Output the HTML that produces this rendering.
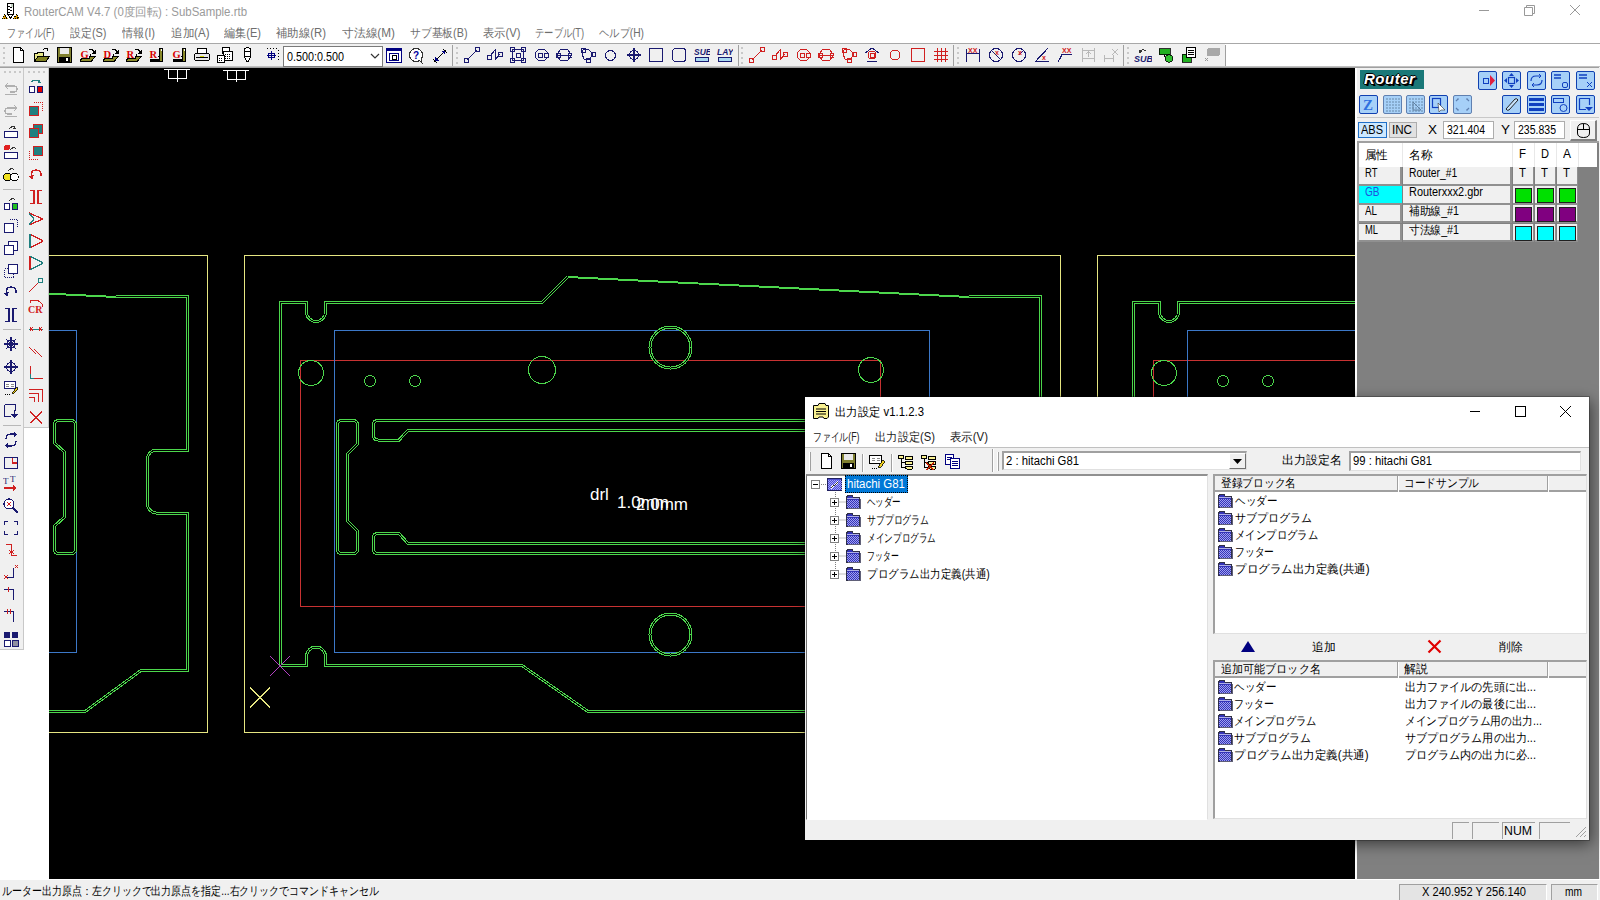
<!DOCTYPE html>
<html><head><meta charset="utf-8"><style>*{margin:0;padding:0;box-sizing:border-box}
html,body{width:1600px;height:900px;overflow:hidden;background:#fff;font-family:"Liberation Sans",sans-serif;font-size:12px;color:#000;position:relative}
.a{position:absolute}
.t{position:absolute;white-space:nowrap;line-height:16px;height:16px;transform-origin:0 50%}
</style></head><body>
<div class="a" style="left:0px;top:0px;width:1600px;height:22px;background:#fff"></div><svg class="a" style="left:0px;top:0px" width="22" height="22" viewBox="0 0 22 22" shape-rendering="crispEdges"><rect x="7.5" y="3.5" width="6" height="11" fill="#fff" stroke="#000"/>
<path d="M8 6.5 H10 M8 9.5 H10 M8 12.5 H10 M10 7.5 H12 M10 10.5 H12" stroke="#000"/><rect x="11" y="4" width="2" height="3" fill="#c8d8c8"/>
<path d="M7.5 14.5 L10.5 18 L13.5 14.5" fill="#fff" stroke="#000"/>
<path d="M2 18.5 L4.5 14.5 L7.5 18.5 Z M13.5 18.5 L16.5 14.5 L18.5 18.5 Z" fill="#e0a000" stroke="#000" stroke-dasharray="1 1"/></svg><div class="t" style="left:24px;top:3.5px;font-size:12px;color:#9a9a9a;transform:scaleX(0.9526);width:235.1px;overflow:hidden;">RouterCAM V4.7 (0度回転) : SubSample.rtb</div><svg class="a" style="left:1470px;top:0px" width="130" height="22" viewBox="0 0 130 22" ><path d="M9 10.5 H19" stroke="#999"/>
<path d="M54.5 7.5 H62.5 V15.5 H54.5 Z M56.5 7.5 V5.5 H64.5 V13.5 H62.5" fill="none" stroke="#999"/>
<path d="M100 5 L110 15 M110 5 L100 15" stroke="#999"/></svg><div class="a" style="left:0px;top:22px;width:1600px;height:21px;background:#fff"></div><div class="t" style="left:7px;top:24.5px;font-size:12px;color:#6e6e6e;transform:scaleX(0.7501);width:64.3px;overflow:hidden;">ファイル(F)</div><div class="t" style="left:69.5px;top:24.5px;font-size:12px;color:#6e6e6e;transform:scaleX(0.9125);width:41.0px;overflow:hidden;">設定(S)</div><div class="t" style="left:122px;top:24.5px;font-size:12px;color:#6e6e6e;transform:scaleX(0.9341);width:36.3px;overflow:hidden;">情報(I)</div><div class="t" style="left:171px;top:24.5px;font-size:12px;color:#6e6e6e;transform:scaleX(0.9625);width:41.0px;overflow:hidden;">追加(A)</div><div class="t" style="left:224px;top:24.5px;font-size:12px;color:#6e6e6e;transform:scaleX(0.9250);width:41.0px;overflow:hidden;">編集(E)</div><div class="t" style="left:276px;top:24.5px;font-size:12px;color:#6e6e6e;transform:scaleX(0.9493);width:53.7px;overflow:hidden;">補助線(R)</div><div class="t" style="left:342px;top:24.5px;font-size:12px;color:#6e6e6e;transform:scaleX(0.9815);width:55.0px;overflow:hidden;">寸法線(M)</div><div class="t" style="left:410px;top:24.5px;font-size:12px;color:#6e6e6e;transform:scaleX(0.8984);width:65.0px;overflow:hidden;">サブ基板(B)</div><div class="t" style="left:482.5px;top:24.5px;font-size:12px;color:#6e6e6e;transform:scaleX(0.9375);width:41.0px;overflow:hidden;">表示(V)</div><div class="t" style="left:535px;top:24.5px;font-size:12px;color:#6e6e6e;transform:scaleX(0.7737);width:64.3px;overflow:hidden;">テーブル(T)</div><div class="t" style="left:599px;top:24.5px;font-size:12px;color:#6e6e6e;transform:scaleX(0.8543);width:53.7px;overflow:hidden;">ヘルプ(H)</div><div class="a" style="left:0px;top:43px;width:1600px;height:25px;background:#fff;border-top:1px solid #a8a8a8"></div><div class="a" style="left:0px;top:44px;width:1225px;height:23px;background:#f0f0f0"></div><div class="a" style="left:0px;top:66px;width:1600px;height:2px;background:linear-gradient(#d0d0d0,#909090)"></div><div class="a" style="left:3px;top:47px;width:2px;height:2px;background:#c8c8c8"></div><div class="a" style="left:3px;top:52px;width:2px;height:2px;background:#c8c8c8"></div><div class="a" style="left:3px;top:57px;width:2px;height:2px;background:#c8c8c8"></div><div class="a" style="left:3px;top:62px;width:2px;height:2px;background:#c8c8c8"></div><svg class="a" style="left:12px;top:47px" width="16" height="16" viewBox="0 0 16 16" shape-rendering="crispEdges"><path d="M1.5 .5 H8.5 L11.5 3.5 V15.5 H1.5 Z" fill="#fff" stroke="#000"/><path d="M8.5 .5 V3.5 H11.5" fill="none" stroke="#000"/></svg><svg class="a" style="left:34px;top:47px" width="16" height="16" viewBox="0 0 16 16" shape-rendering="crispEdges"><path d="M.5 6.5 H3 L4 5 H9 V14.5 H.5 Z" fill="#e8e888" stroke="#000"/><path d="M.5 14.5 L4 9.5 H15.5 L12 14.5 Z" fill="#808020" stroke="#000"/><path d="M9 3 Q11 0 14 2 M12.5 1.5 L14 2 L13.5 4" fill="none" stroke="#000"/></svg><svg class="a" style="left:57px;top:47px" width="16" height="16" viewBox="0 0 16 16" shape-rendering="crispEdges"><rect x=".5" y=".5" width="14" height="15" fill="#808030" stroke="#000"/><rect x="3" y="1" width="9" height="6" fill="#e8e8e8"/><rect x="2" y="10" width="11" height="5" fill="#000"/><rect x="9" y="11" width="2" height="3" fill="#fff"/></svg><svg class="a" style="left:80px;top:47px" width="16" height="16" viewBox="0 0 16 16" shape-rendering="crispEdges"><text x="0.5" y="11" font-family="Liberation Serif" font-weight="bold" font-size="10.5" fill="#d80000">G</text><path d="M9 2.5 H12 L14.5 5" fill="none" stroke="#000"/><path d="M12 6.5 H15.5 V3 Z" fill="#000"/><path d="M10.5 7 V10.5 M9.5 7.5 H10.5" stroke="#000"/><path d="M0.5 14.5 H11 L15.5 9.5 H9.5 V11.5 H2.5 L0.5 12.5 Z" fill="#8a8a2a" stroke="#000"/></svg><svg class="a" style="left:103px;top:47px" width="16" height="16" viewBox="0 0 16 16" shape-rendering="crispEdges"><text x="0.5" y="11" font-family="Liberation Serif" font-weight="bold" font-size="10.5" fill="#d80000">D</text><path d="M9 2.5 H12 L14.5 5" fill="none" stroke="#000"/><path d="M12 6.5 H15.5 V3 Z" fill="#000"/><path d="M10.5 7 V10.5 M9.5 7.5 H10.5" stroke="#000"/><path d="M0.5 14.5 H11 L15.5 9.5 H9.5 V11.5 H2.5 L0.5 12.5 Z" fill="#8a8a2a" stroke="#000"/></svg><svg class="a" style="left:126px;top:47px" width="16" height="16" viewBox="0 0 16 16" shape-rendering="crispEdges"><text x="0.5" y="11" font-family="Liberation Serif" font-weight="bold" font-size="10.5" fill="#d80000">R</text><path d="M9 2.5 H12 L14.5 5" fill="none" stroke="#000"/><path d="M12 6.5 H15.5 V3 Z" fill="#000"/><path d="M10.5 7 V10.5 M9.5 7.5 H10.5" stroke="#000"/><path d="M0.5 14.5 H11 L15.5 9.5 H9.5 V11.5 H2.5 L0.5 12.5 Z" fill="#8a8a2a" stroke="#000"/></svg><svg class="a" style="left:149px;top:47px" width="16" height="16" viewBox="0 0 16 16" shape-rendering="crispEdges"><text x="0.5" y="11" font-family="Liberation Serif" font-weight="bold" font-size="10.5" fill="#d80000">R</text><rect x="10.5" y="1.5" width="3" height="13" fill="#8a8a2a" stroke="#000"/><rect x="12" y="2" width="1" height="2" fill="#fff"/><rect x="1" y="12" width="10" height="3" fill="#000"/><path d="M8.5 9.5 H10.5" stroke="#000"/></svg><svg class="a" style="left:172px;top:47px" width="16" height="16" viewBox="0 0 16 16" shape-rendering="crispEdges"><text x="0.5" y="11" font-family="Liberation Serif" font-weight="bold" font-size="10.5" fill="#d80000">G</text><rect x="10.5" y="1.5" width="3" height="13" fill="#8a8a2a" stroke="#000"/><rect x="12" y="2" width="1" height="2" fill="#fff"/><rect x="1" y="12" width="10" height="3" fill="#000"/><path d="M8.5 9.5 H10.5" stroke="#000"/></svg><svg class="a" style="left:194px;top:47px" width="16" height="16" viewBox="0 0 16 16" shape-rendering="crispEdges"><path d="M4 1.5 H13 L12 6 H3 Z" fill="#fff" stroke="#000"/><rect x=".5" y="6.5" width="15" height="7" rx="2" fill="#e8e8e8" stroke="#000"/><path d="M2 10.5 H14" stroke="#000"/><rect x="6" y="9" width="4" height="1" fill="#d0d000"/></svg><svg class="a" style="left:217px;top:47px" width="16" height="16" viewBox="0 0 16 16" shape-rendering="crispEdges"><rect x="5.5" y=".5" width="7" height="6" fill="#fff" stroke="#000"/><rect x="6.5" y="4.5" width="9" height="9" fill="#fff" stroke="#000"/><rect x=".5" y="8.5" width="7" height="7" fill="#fff" stroke="#000"/><path d="M8 7 H14 M8 9 H14 M8 11 H14 M2 11 H5 M2 13 H5" stroke="#000" stroke-dasharray="1 1"/></svg><svg class="a" style="left:242px;top:47px" width="11" height="16" viewBox="0 0 11 16" shape-rendering="crispEdges"><path d="M2.5 1.5 Q5 0 8.5 1.5 V10 L6 14.5 H5 L2.5 10 Z" fill="#fff" stroke="#000"/><path d="M3 4 H8 M3 9 H8" stroke="#000"/></svg><svg class="a" style="left:264px;top:47px" width="16" height="16" viewBox="0 0 16 16" shape-rendering="crispEdges"><path d="M3 8.5 H12 M7.5 4 V13 M4.5 6.5 H10.5 V10.5 H4.5 Z" stroke="#000080" fill="none" stroke-width="1.4"/><path d="M3 1.5 H15 M14.5 3 V15" stroke="#000" stroke-dasharray="1 2"/></svg><div class="a" style="left:283px;top:46px;width:100px;height:21px;background:#fff;border:1px solid #7a7a7a"></div><div class="t" style="left:287px;top:48.5px;font-size:12px;color:#000;transform:scaleX(0.8990);width:64.4px;overflow:hidden;">0.500:0.500</div><svg class="a" style="left:370px;top:53px" width="10" height="7" viewBox="0 0 10 7" ><path d="M1 1 L5 5 L9 1" fill="none" stroke="#333" stroke-width="1.2"/></svg><svg class="a" style="left:386px;top:48px" width="16" height="16" viewBox="0 0 16 16" shape-rendering="crispEdges"><rect x=".5" y=".5" width="15" height="14" fill="#fff" stroke="#000080"/><rect x="1" y="1" width="14" height="2" fill="#000080"/><rect x="3.5" y="5.5" width="9" height="7" fill="none" stroke="#000080"/><rect x="6" y="7" width="4" height="4" fill="none" stroke="#000"/></svg><svg class="a" style="left:409px;top:48px" width="16" height="16" viewBox="0 0 16 16" shape-rendering="crispEdges"><circle cx="7" cy="7" r="6.5" fill="#fff" stroke="#333"/><path d="M10 12 L13 15 L12 10" fill="#fff" stroke="#333"/><text x="4" y="11" font-family="Liberation Sans" font-weight="bold" font-size="10" fill="#0000a0">?</text></svg><svg class="a" style="left:432px;top:48px" width="16" height="16" viewBox="0 0 16 16" shape-rendering="crispEdges"><path d="M2 14 L14 2" stroke="#000" stroke-width="1"/><path d="M1 11 L5 15 M11 1 L15 5" stroke="#000"/><path d="M3 13 L3 9 L7 13 Z M13 3 L13 7 L9 3 Z" fill="#000080"/></svg><div class="a" style="left:452px;top:45px;width:1px;height:21px;background:#a0a0a0"></div><div class="a" style="left:456px;top:47px;width:2px;height:2px;background:#c8c8c8"></div><div class="a" style="left:456px;top:52px;width:2px;height:2px;background:#c8c8c8"></div><div class="a" style="left:456px;top:57px;width:2px;height:2px;background:#c8c8c8"></div><div class="a" style="left:456px;top:62px;width:2px;height:2px;background:#c8c8c8"></div><svg class="a" style="left:464px;top:47px" width="16" height="16" viewBox="0 0 16 16" shape-rendering="crispEdges"><path d="M3 13 L13 3" stroke="#1a1a70"/><rect x="0.5" y="11.5" width="4" height="4" fill="none" stroke="#1a1a70"/><rect x="11.5" y="0.5" width="4" height="4" fill="none" stroke="#1a1a70"/></svg><svg class="a" style="left:487px;top:47px" width="16" height="16" viewBox="0 0 16 16" shape-rendering="crispEdges"><path d="M3 9 L8 3 L8 13 L13 7" stroke="#1a1a70" fill="none"/><rect x="0.5" y="8.5" width="4" height="4" fill="none" stroke="#1a1a70"/><rect x="11.5" y="5.5" width="4" height="4" fill="none" stroke="#1a1a70"/></svg><svg class="a" style="left:510px;top:47px" width="16" height="16" viewBox="0 0 16 16" shape-rendering="crispEdges"><rect x="2.5" y="2.5" width="11" height="11" fill="none" stroke="#1a1a70"/><rect x="0.5" y="0.5" width="4" height="4" fill="none" stroke="#1a1a70"/><rect x="11.5" y="0.5" width="4" height="4" fill="none" stroke="#1a1a70"/><rect x="0.5" y="11.5" width="4" height="4" fill="none" stroke="#1a1a70"/><rect x="11.5" y="11.5" width="4" height="4" fill="none" stroke="#1a1a70"/><rect x="6.0" y="6.0" width="4" height="4" fill="none" stroke="#1a1a70"/></svg><svg class="a" style="left:534px;top:47px" width="16" height="16" viewBox="0 0 16 16" shape-rendering="crispEdges"><path d="M4.5 2.5 H10.5 L14 6 V10 L10.5 13.5 H4.5 L1 10 V6 Z" fill="none" stroke="#1a1a70"/><rect x="4.5" y="6.5" width="4" height="4" fill="none" stroke="#1a1a70"/><rect x="10.5" y="6.5" width="4" height="4" fill="none" stroke="#1a1a70"/></svg><svg class="a" style="left:556px;top:47px" width="16" height="16" viewBox="0 0 16 16" shape-rendering="crispEdges"><path d="M4.5 2.5 H11.5 L15 7 V9 L11.5 13.5 H4.5 L1 9 V7 Z M1 8 H15" fill="none" stroke="#1a1a70"/><rect x="0.0" y="6.5" width="4" height="4" fill="none" stroke="#1a1a70"/><rect x="12.5" y="6.5" width="4" height="4" fill="none" stroke="#1a1a70"/></svg><svg class="a" style="left:580px;top:47px" width="16" height="16" viewBox="0 0 16 16" shape-rendering="crispEdges"><path d="M3 3 L8 2 L13 7 L9 13 L4 12 L2 7 Z" fill="none" stroke="#1a1a70"/><rect x="1.5" y="1.5" width="4" height="4" fill="none" stroke="#1a1a70"/><rect x="11.5" y="5.5" width="4" height="4" fill="none" stroke="#1a1a70"/><rect x="6.5" y="11.5" width="4" height="4" fill="none" stroke="#1a1a70"/></svg><svg class="a" style="left:603px;top:47px" width="16" height="16" viewBox="0 0 16 16" shape-rendering="crispEdges"><circle cx="7.5" cy="8.5" r="5" fill="none" stroke="#1a1a70"/></svg><svg class="a" style="left:626px;top:47px" width="16" height="16" viewBox="0 0 16 16" shape-rendering="crispEdges"><circle cx="8" cy="8" r="4.5" fill="none" stroke="#1a1a70" stroke-width="1.3"/><path d="M8 1 V15 M1 8 H15" stroke="#1a1a70" stroke-width="1.3"/></svg><svg class="a" style="left:648px;top:47px" width="16" height="16" viewBox="0 0 16 16" shape-rendering="crispEdges"><rect x="1.5" y="1.5" width="13" height="13" fill="none" stroke="#1a1a70" stroke-width="1.3"/></svg><svg class="a" style="left:671px;top:47px" width="16" height="16" viewBox="0 0 16 16" shape-rendering="crispEdges"><rect x="1.5" y="1.5" width="13" height="13" rx="3" fill="none" stroke="#1a1a70" stroke-width="1.3"/></svg><svg class="a" style="left:694px;top:47px" width="16" height="16" viewBox="0 0 16 16" shape-rendering="crispEdges"><text x="0" y="8" font-family="Liberation Sans" font-weight="bold" font-style="italic" font-size="8.5" fill="#1a1a70">SUB</text><rect x="1.5" y="10.5" width="13" height="4" fill="#a8d8f0" stroke="#1a1a70"/></svg><svg class="a" style="left:717px;top:47px" width="16" height="16" viewBox="0 0 16 16" shape-rendering="crispEdges"><text x="0" y="8" font-family="Liberation Sans" font-weight="bold" font-style="italic" font-size="8.5" fill="#1a1a70">LAY</text><rect x="1.5" y="10.5" width="13" height="4" fill="#a8d8f0" stroke="#1a1a70"/></svg><div class="a" style="left:738px;top:45px;width:1px;height:21px;background:#a0a0a0"></div><div class="a" style="left:741px;top:47px;width:2px;height:2px;background:#c8c8c8"></div><div class="a" style="left:741px;top:52px;width:2px;height:2px;background:#c8c8c8"></div><div class="a" style="left:741px;top:57px;width:2px;height:2px;background:#c8c8c8"></div><div class="a" style="left:741px;top:62px;width:2px;height:2px;background:#c8c8c8"></div><svg class="a" style="left:749px;top:47px" width="16" height="16" viewBox="0 0 16 16" shape-rendering="crispEdges"><path d="M3 13 L13 3" stroke="#d02020"/><rect x="0.5" y="11.5" width="4" height="4" fill="none" stroke="#d02020"/><rect x="11.5" y="0.5" width="4" height="4" fill="none" stroke="#d02020"/></svg><svg class="a" style="left:772px;top:47px" width="16" height="16" viewBox="0 0 16 16" shape-rendering="crispEdges"><path d="M3 9 L8 3 L8 13 L13 7" stroke="#d02020" fill="none"/><rect x="0.5" y="8.5" width="4" height="4" fill="none" stroke="#d02020"/><rect x="11.5" y="5.5" width="4" height="4" fill="none" stroke="#d02020"/></svg><svg class="a" style="left:796px;top:47px" width="16" height="16" viewBox="0 0 16 16" shape-rendering="crispEdges"><path d="M4.5 2.5 H10.5 L14 6 V10 L10.5 13.5 H4.5 L1 10 V6 Z" fill="none" stroke="#d02020"/><rect x="4.5" y="6.5" width="4" height="4" fill="none" stroke="#d02020"/><rect x="10.5" y="6.5" width="4" height="4" fill="none" stroke="#d02020"/></svg><svg class="a" style="left:818px;top:47px" width="16" height="16" viewBox="0 0 16 16" shape-rendering="crispEdges"><path d="M4.5 2.5 H11.5 L15 7 V9 L11.5 13.5 H4.5 L1 9 V7 Z M1 8 H15" fill="none" stroke="#d02020"/><rect x="0.0" y="6.5" width="4" height="4" fill="none" stroke="#d02020"/><rect x="12.5" y="6.5" width="4" height="4" fill="none" stroke="#d02020"/></svg><svg class="a" style="left:841px;top:47px" width="16" height="16" viewBox="0 0 16 16" shape-rendering="crispEdges"><path d="M3 3 L8 2 L13 7 L9 13 L4 12 L2 7 Z" fill="none" stroke="#d02020"/><rect x="1.5" y="1.5" width="4" height="4" fill="none" stroke="#d02020"/><rect x="11.5" y="5.5" width="4" height="4" fill="none" stroke="#d02020"/><rect x="6.5" y="11.5" width="4" height="4" fill="none" stroke="#d02020"/></svg><svg class="a" style="left:864px;top:47px" width="16" height="16" viewBox="0 0 16 16" shape-rendering="crispEdges"><path d="M1 6 L8 1 L15 6" fill="none" stroke="#1a1a70"/><circle cx="8" cy="8" r="4" fill="none" stroke="#d02020"/><rect x="6.0" y="6.0" width="4" height="4" fill="none" stroke="#d02020"/><path d="M3 14.5 H13" stroke="#1a1a70"/></svg><svg class="a" style="left:887px;top:47px" width="16" height="16" viewBox="0 0 16 16" shape-rendering="crispEdges"><circle cx="8" cy="8" r="5" fill="none" stroke="#d02020"/></svg><svg class="a" style="left:910px;top:47px" width="16" height="16" viewBox="0 0 16 16" shape-rendering="crispEdges"><rect x="1.5" y="1.5" width="13" height="13" fill="none" stroke="#d02020" stroke-width="1.3"/></svg><svg class="a" style="left:933px;top:47px" width="16" height="16" viewBox="0 0 16 16" shape-rendering="crispEdges"><path d="M1 4.5 H15 M1 8.5 H15 M1 12.5 H15 M4.5 1 V15 M8.5 1 V15 M12.5 1 V15" stroke="#d02020" stroke-width="1.3"/></svg><div class="a" style="left:953px;top:45px;width:1px;height:21px;background:#a0a0a0"></div><div class="a" style="left:957px;top:47px;width:2px;height:2px;background:#c8c8c8"></div><div class="a" style="left:957px;top:52px;width:2px;height:2px;background:#c8c8c8"></div><div class="a" style="left:957px;top:57px;width:2px;height:2px;background:#c8c8c8"></div><div class="a" style="left:957px;top:62px;width:2px;height:2px;background:#c8c8c8"></div><svg class="a" style="left:965px;top:47px" width="16" height="16" viewBox="0 0 16 16" shape-rendering="crispEdges"><path d="M1.5 2 V15 M14.5 2 V15 M1.5 6.5 H14.5" stroke="#1a1a70" fill="none" stroke-width="1.3"/><text x="3" y="6" font-family="Liberation Sans" font-weight="bold" font-size="7" fill="#d02020">XX</text></svg><svg class="a" style="left:988px;top:47px" width="16" height="16" viewBox="0 0 16 16" shape-rendering="crispEdges"><circle cx="8" cy="8" r="6.5" fill="none" stroke="#1a1a70" stroke-width="1.2"/><path d="M3 3 L13 13" stroke="#1a1a70"/><text x="7" y="8" font-family="Liberation Sans" font-weight="bold" font-size="7" fill="#d02020">x</text></svg><svg class="a" style="left:1011px;top:47px" width="16" height="16" viewBox="0 0 16 16" shape-rendering="crispEdges"><circle cx="8" cy="8" r="6.5" fill="none" stroke="#1a1a70" stroke-width="1.2"/><path d="M8 8 L13 3" stroke="#1a1a70"/><text x="7" y="8" font-family="Liberation Sans" font-weight="bold" font-size="7" fill="#d02020">x</text></svg><svg class="a" style="left:1034px;top:47px" width="16" height="16" viewBox="0 0 16 16" shape-rendering="crispEdges"><path d="M14 1 L1.5 14.5 H15" fill="none" stroke="#1a1a70" stroke-width="1.2"/><text x="8" y="13" font-family="Liberation Sans" font-weight="bold" font-size="7" fill="#d02020">x</text></svg><svg class="a" style="left:1057px;top:47px" width="16" height="16" viewBox="0 0 16 16" shape-rendering="crispEdges"><path d="M1 15 L5 7.5 H15" fill="none" stroke="#1a1a70" stroke-width="1.2"/><text x="5" y="6" font-family="Liberation Sans" font-weight="bold" font-size="7" fill="#d02020">XX</text></svg><svg class="a" style="left:1081px;top:47px" width="16" height="16" viewBox="0 0 16 16" shape-rendering="crispEdges"><path d="M1.5 1 V15 M13.5 1 V15 M1.5 3.5 H13.5 M1.5 11.5 H13.5 M7.5 10 V5 M5 7 L7.5 4.5 L10 7" stroke="#b8b8b8" fill="none"/></svg><svg class="a" style="left:1103px;top:47px" width="16" height="16" viewBox="0 0 16 16" shape-rendering="crispEdges"><path d="M1.5 8 V15 M10.5 8 V15 M1.5 11.5 H10.5 M9 2 L15 8 M15 2 L9 8" stroke="#b8b8b8" fill="none" stroke-width="1.3"/></svg><div class="a" style="left:1123px;top:45px;width:1px;height:21px;background:#a0a0a0"></div><div class="a" style="left:1127px;top:47px;width:2px;height:2px;background:#c8c8c8"></div><div class="a" style="left:1127px;top:52px;width:2px;height:2px;background:#c8c8c8"></div><div class="a" style="left:1127px;top:57px;width:2px;height:2px;background:#c8c8c8"></div><div class="a" style="left:1127px;top:62px;width:2px;height:2px;background:#c8c8c8"></div><svg class="a" style="left:1134px;top:47px" width="18" height="16" viewBox="0 0 18 16" shape-rendering="crispEdges"><path d="M6 5 Q8 1 12 4" fill="none" stroke="#333"/><path d="M5 3 L6 5.5 L8.5 4.5" fill="none" stroke="#333"/><text x="0" y="15" font-family="Liberation Sans" font-weight="bold" font-style="italic" font-size="9" fill="#1a1a70">SUB</text></svg><svg class="a" style="left:1158px;top:47px" width="16" height="16" viewBox="0 0 16 16" shape-rendering="crispEdges"><rect x="1" y="1.5" width="11" height="6" fill="#20b020" stroke="#000" stroke-width=".8"/><path d="M6 7.5 V10" stroke="#000"/><circle cx="11" cy="11.5" r="3.8" fill="#30c030" stroke="#000" stroke-width=".8"/></svg><svg class="a" style="left:1181px;top:47px" width="16" height="16" viewBox="0 0 16 16" shape-rendering="crispEdges"><rect x="1" y="7" width="9" height="8" fill="#20b020" stroke="#000" stroke-width=".8"/><rect x="5.5" y=".5" width="9" height="10" fill="#fff" stroke="#000"/><path d="M7 3 H13 M7 5 H13 M7 7 H13" stroke="#000"/></svg><svg class="a" style="left:1204px;top:47px" width="16" height="16" viewBox="0 0 16 16" shape-rendering="crispEdges"><rect x="3" y="1" width="13" height="8" rx="2" fill="#a8a8a8"/><path d="M1 11 L4 14 M4 11 L1 14" stroke="#999"/></svg><div class="a" style="left:1225px;top:45px;width:1px;height:21px;background:#a0a0a0"></div><div class="a" style="left:0px;top:68px;width:49px;height:811px;background:#fff"></div><div class="a" style="left:0px;top:68px;width:24px;height:582px;background:#f0f0f0;border-right:1px solid #c8c8c8;border-bottom:1px solid #c8c8c8"></div><div class="a" style="left:24px;top:68px;width:25px;height:360px;background:#f0f0f0;border-right:1px solid #c8c8c8;border-bottom:1px solid #c8c8c8"></div><div class="a" style="left:4px;top:71px;width:2px;height:2px;background:#c8c8c8"></div><div class="a" style="left:28px;top:71px;width:2px;height:2px;background:#c8c8c8"></div><div class="a" style="left:9px;top:71px;width:2px;height:2px;background:#c8c8c8"></div><div class="a" style="left:33px;top:71px;width:2px;height:2px;background:#c8c8c8"></div><div class="a" style="left:14px;top:71px;width:2px;height:2px;background:#c8c8c8"></div><div class="a" style="left:38px;top:71px;width:2px;height:2px;background:#c8c8c8"></div><div class="a" style="left:19px;top:71px;width:2px;height:2px;background:#c8c8c8"></div><div class="a" style="left:43px;top:71px;width:2px;height:2px;background:#c8c8c8"></div><svg class="a" style="left:3px;top:80px" width="16" height="16" viewBox="0 0 16 16" shape-rendering="crispEdges"><path d="M2 6 H11 Q14 6 14 9 Q14 12 11 12 H7 M2 6 L5 3 M2 6 L5 9" fill="none" stroke="#b0b0b0" stroke-width="1.3"/><path d="M2 14.5 H14" stroke="#b0b0b0"/></svg><svg class="a" style="left:3px;top:102px" width="16" height="16" viewBox="0 0 16 16" shape-rendering="crispEdges"><path d="M14 6 H5 Q2 6 2 9 Q2 12 5 12 H9 M14 6 L11 3 M14 6 L11 9" fill="none" stroke="#b0b0b0" stroke-width="1.3"/><path d="M2 14.5 H14" stroke="#b0b0b0"/></svg><svg class="a" style="left:3px;top:123px" width="16" height="16" viewBox="0 0 16 16" shape-rendering="crispEdges"><rect x="1.5" y="8.5" width="13" height="6" fill="#fff" stroke="#1a1a70" stroke-width="1.3"/><path d="M6 6 Q9 2 12 5 M11 3 L12.5 5.5 L10 6" fill="none" stroke="#333"/></svg><svg class="a" style="left:3px;top:144px" width="16" height="16" viewBox="0 0 16 16" shape-rendering="crispEdges"><rect x="1.5" y="8.5" width="13" height="6" fill="#fff" stroke="#1a1a70" stroke-width="1.3"/><path d="M7 6 Q10 2 13 5" fill="none" stroke="#333"/><rect x="1" y="1" width="6" height="5" rx="2" fill="#e02020"/></svg><svg class="a" style="left:3px;top:166px" width="16" height="16" viewBox="0 0 16 16" shape-rendering="crispEdges"><path d="M5 5 Q8 1 11 4" fill="none" stroke="#333"/><circle cx="4.5" cy="11" r="3.8" fill="#f0e020" stroke="#000"/><circle cx="11.5" cy="11" r="3.8" fill="#fff" stroke="#000"/></svg><svg class="a" style="left:3px;top:196px" width="16" height="16" viewBox="0 0 16 16" shape-rendering="crispEdges"><rect x="1.5" y="7.5" width="5" height="6" fill="#fff" stroke="#1a1a70"/><rect x="9.5" y="7.5" width="5" height="6" fill="#20c020" stroke="#1a1a70"/><path d="M6 5 Q9 1 12 4" fill="none" stroke="#333"/></svg><svg class="a" style="left:3px;top:218px" width="16" height="16" viewBox="0 0 16 16" shape-rendering="crispEdges"><rect x="1.5" y="5.5" width="9" height="9" fill="#fff" stroke="#1a1a70" stroke-width="1.3"/><path d="M7 1.5 H14.5 V9" fill="none" stroke="#1a1a70" stroke-dasharray="1 1"/></svg><svg class="a" style="left:3px;top:240px" width="16" height="16" viewBox="0 0 16 16" shape-rendering="crispEdges"><rect x="5.5" y="1.5" width="9" height="9" fill="#fff" stroke="#1a1a70" stroke-width="1.3"/><rect x="1.5" y="5.5" width="9" height="9" fill="#fff" stroke="#1a1a70" stroke-width="1.3"/></svg><svg class="a" style="left:3px;top:263px" width="16" height="16" viewBox="0 0 16 16" shape-rendering="crispEdges"><path d="M1.5 5.5 H10.5 V14.5 H1.5 Z" fill="none" stroke="#1a1a70" stroke-dasharray="1 1"/><rect x="5.5" y="1.5" width="9" height="9" fill="#fff" stroke="#1a1a70" stroke-width="1.3"/></svg><svg class="a" style="left:3px;top:284px" width="16" height="16" viewBox="0 0 16 16" shape-rendering="crispEdges"><path d="M4 10 Q2 3 8 3 Q14 3 13 9" fill="none" stroke="#1a1a70" stroke-width="1.4"/><path d="M1 9 L4 13 L6 8 Z" fill="#1a1a70"/></svg><svg class="a" style="left:3px;top:307px" width="16" height="16" viewBox="0 0 16 16" shape-rendering="crispEdges"><path d="M2 1.5 H6 V14.5 H2 M14 1.5 H10 V14.5 H14" fill="none" stroke="#1a1a70" stroke-width="1.3"/></svg><svg class="a" style="left:3px;top:336px" width="16" height="16" viewBox="0 0 16 16" shape-rendering="crispEdges"><path d="M8 1 V15 M1 8 H15 M3 3 L13 13 M13 3 L3 13" stroke="#1a1a70" stroke-width="1.2"/><circle cx="8" cy="8" r="4" fill="none" stroke="#1a1a70" stroke-width="1.3"/></svg><svg class="a" style="left:3px;top:359px" width="16" height="16" viewBox="0 0 16 16" shape-rendering="crispEdges"><circle cx="8" cy="8" r="4.5" fill="none" stroke="#1a1a70" stroke-width="1.3"/><path d="M8 1 V15 M1 8 H15" stroke="#1a1a70" stroke-width="1.3"/></svg><svg class="a" style="left:3px;top:380px" width="16" height="16" viewBox="0 0 16 16" shape-rendering="crispEdges"><rect x="1.5" y="1.5" width="11" height="7" fill="#fff" stroke="#1a1a70"/><path d="M3 4 H6 M8 4 H11 M3 6 H6 M8 6 H11" stroke="#888"/><path d="M9 13 L14 7 L15 9 L10 14 Z" fill="#f0d020" stroke="#000" stroke-width=".8"/><path d="M2 14 H7" stroke="#000" stroke-dasharray="1 1"/></svg><svg class="a" style="left:3px;top:403px" width="16" height="16" viewBox="0 0 16 16" shape-rendering="crispEdges"><path d="M1.5 1.5 H12.5 V8 M1.5 1.5 V13.5 H8" fill="none" stroke="#1a1a70" stroke-width="1.3"/><path d="M8 11 H15 L11.5 15 Z" fill="#1a1a70"/><path d="M11.5 7 V12" stroke="#1a1a70" stroke-width="1.3"/></svg><svg class="a" style="left:3px;top:432px" width="16" height="16" viewBox="0 0 16 16" shape-rendering="crispEdges"><path d="M3 7 Q3 2 8 2 H12 M13 9 Q13 14 8 14 H4" fill="none" stroke="#1a1a70" stroke-width="1.4"/><path d="M11 0 L14 2.5 L11 5 Z M5 11 L2 13.5 L5 16 Z" fill="#1a1a70"/></svg><svg class="a" style="left:3px;top:455px" width="16" height="16" viewBox="0 0 16 16" shape-rendering="crispEdges"><rect x="1.5" y="2.5" width="13" height="11" fill="none" stroke="#1a1a70" stroke-width="1.3"/><path d="M9.5 3 V8 H14" stroke="#d02020" fill="none" stroke-width="1.2"/></svg><svg class="a" style="left:3px;top:476px" width="16" height="16" viewBox="0 0 16 16" shape-rendering="crispEdges"><text x="0" y="8" font-family="Liberation Serif" font-size="9" fill="#1a1a70">T</text><text x="7" y="6" font-family="Liberation Serif" font-size="9" fill="#1a1a70">T</text><path d="M1 12 H13 M10 9.5 L13 12 L10 14.5" fill="none" stroke="#d02020" stroke-width="1.3"/></svg><svg class="a" style="left:3px;top:498px" width="16" height="16" viewBox="0 0 16 16" shape-rendering="crispEdges"><circle cx="6" cy="6" r="5" fill="#fff" stroke="#1a1a70" stroke-width="1.2"/><path d="M4 4 L8 8 M8 4 L4 8" stroke="#d02020"/><path d="M9.5 9.5 L15 15" stroke="#1a1a70" stroke-width="1.8"/></svg><svg class="a" style="left:3px;top:520px" width="16" height="16" viewBox="0 0 16 16" shape-rendering="crispEdges"><path d="M1.5 5 V1.5 H5 M11 1.5 H14.5 V5 M14.5 11 V14.5 H11 M5 14.5 H1.5 V11" fill="none" stroke="#1a1a70" stroke-width="1.4"/></svg><svg class="a" style="left:3px;top:542px" width="16" height="16" viewBox="0 0 16 16" shape-rendering="crispEdges"><path d="M3 2.5 H8.5 V13.5 H14" fill="none" stroke="#d02020" stroke-width="1.3"/><path d="M6 8 L11 12 M11 8 L6 12" stroke="#d02020"/></svg><svg class="a" style="left:3px;top:564px" width="16" height="16" viewBox="0 0 16 16" shape-rendering="crispEdges"><path d="M3 13.5 H10.5 V4" fill="none" stroke="#1a1a70" stroke-width="1.3"/><path d="M1 11 L5 15 M5 11 L1 15 M12 1 L15 4 M15 1 L12 4" stroke="#d02020"/></svg><svg class="a" style="left:3px;top:586px" width="16" height="16" viewBox="0 0 16 16" shape-rendering="crispEdges"><path d="M1 3.5 H10.5 V14" fill="none" stroke="#1a1a70" stroke-width="1.4"/><path d="M5.5 1 V6" stroke="#d02020" stroke-width="1.2"/></svg><svg class="a" style="left:3px;top:608px" width="16" height="16" viewBox="0 0 16 16" shape-rendering="crispEdges"><path d="M1 3.5 H10.5 V14" fill="none" stroke="#1a1a70" stroke-width="1.4"/><path d="M4.5 1 V6 M7.5 1 V6" stroke="#d02020" stroke-width="1.2"/></svg><svg class="a" style="left:3px;top:631px" width="16" height="16" viewBox="0 0 16 16" shape-rendering="crispEdges"><rect x="1" y="1" width="6" height="6" fill="#1a1a70"/><rect x="9" y="1" width="6" height="6" fill="#1a1a70"/><rect x="1" y="9" width="6" height="6" fill="#fff" stroke="#1a1a70"/><rect x="9" y="9" width="6" height="6" fill="#9090a0" stroke="#1a1a70"/></svg><div class="a" style="left:3px;top:189px;width:18px;height:1px;background:#b8b8b8"></div><div class="a" style="left:3px;top:329px;width:18px;height:1px;background:#b8b8b8"></div><div class="a" style="left:3px;top:425px;width:18px;height:1px;background:#b8b8b8"></div><svg class="a" style="left:28px;top:78px" width="16" height="16" viewBox="0 0 16 16" shape-rendering="crispEdges"><path d="M3 4 Q8 0 12 4 M11 2 L12.5 4.5 L10 5" fill="none" stroke="#208080"/><rect x="1.5" y="8.5" width="5" height="6" fill="#fff" stroke="#1a1a70"/><rect x="9.5" y="8.5" width="5" height="6" fill="#e00000" stroke="#1a1a70"/></svg><svg class="a" style="left:28px;top:101px" width="16" height="16" viewBox="0 0 16 16" shape-rendering="crispEdges"><path d="M6 1.5 H14.5 V9.5" fill="none" stroke="#d02020" stroke-dasharray="1 1"/><rect x="1.5" y="5.5" width="9" height="9" fill="#208080" stroke="#d02020" stroke-width="1.3"/></svg><svg class="a" style="left:28px;top:123px" width="16" height="16" viewBox="0 0 16 16" shape-rendering="crispEdges"><rect x="5.5" y="1.5" width="9" height="9" fill="#208080" stroke="#d02020" stroke-width="1.3"/><rect x="1.5" y="5.5" width="9" height="9" fill="#208080" stroke="#d02020" stroke-width="1.3"/></svg><svg class="a" style="left:28px;top:145px" width="16" height="16" viewBox="0 0 16 16" shape-rendering="crispEdges"><path d="M1.5 6 V14.5 H10" fill="none" stroke="#d02020" stroke-dasharray="1 1"/><rect x="5.5" y="1.5" width="9" height="9" fill="#208080" stroke="#d02020" stroke-width="1.3"/></svg><svg class="a" style="left:28px;top:167px" width="16" height="16" viewBox="0 0 16 16" shape-rendering="crispEdges"><path d="M4 10 Q2 3 8 3 Q14 3 13 9" fill="none" stroke="#d02020" stroke-width="1.4"/><path d="M1 9 L4 13 L6 8 Z" fill="#d02020"/></svg><svg class="a" style="left:28px;top:189px" width="16" height="16" viewBox="0 0 16 16" shape-rendering="crispEdges"><path d="M2 1.5 H6 V14.5 H2 M14 1.5 H10 V14.5 H14" fill="none" stroke="#d02020" stroke-width="1.3"/></svg><svg class="a" style="left:28px;top:211px" width="16" height="16" viewBox="0 0 16 16" shape-rendering="crispEdges"><path d="M1 2 L15 8 L1 14" fill="none" stroke="#d02020" stroke-width="1.3"/><path d="M1 2 L6 8 L1 14" fill="none" stroke="#208080" stroke-width="1.2"/></svg><svg class="a" style="left:28px;top:233px" width="16" height="16" viewBox="0 0 16 16" shape-rendering="crispEdges"><path d="M2 1 L15 8 L2 15" fill="none" stroke="#d02020" stroke-width="1.3"/><path d="M2 1 V15" stroke="#208080" stroke-width="1.3"/></svg><svg class="a" style="left:28px;top:255px" width="16" height="16" viewBox="0 0 16 16" shape-rendering="crispEdges"><path d="M2 1 V15" stroke="#d02020" stroke-width="1.3"/><path d="M2 1 L15 8 L2 15" fill="none" stroke="#208080" stroke-width="1.3"/></svg><svg class="a" style="left:28px;top:277px" width="16" height="16" viewBox="0 0 16 16" shape-rendering="crispEdges"><path d="M1 15 L11 5" stroke="#d02020" stroke-width="1.2"/><rect x="10.5" y="1.5" width="4" height="4" fill="none" stroke="#208080"/></svg><svg class="a" style="left:28px;top:299px" width="16" height="16" viewBox="0 0 16 16" shape-rendering="crispEdges"><path d="M2 4 V1.5 H10 L14 5 V8" fill="none" stroke="#d02020"/><text x="0" y="14" font-family="Liberation Serif" font-weight="bold" font-size="10" fill="#d02020">CR</text></svg><svg class="a" style="left:28px;top:321px" width="16" height="16" viewBox="0 0 16 16" shape-rendering="crispEdges"><path d="M1 8 H15" stroke="#208080"/><path d="M2 6 L5 10 M5 6 L2 10 M11 6 L14 10 M14 6 L11 10" stroke="#d02020"/></svg><svg class="a" style="left:28px;top:343px" width="16" height="16" viewBox="0 0 16 16" shape-rendering="crispEdges"><path d="M1 4 L8 11 M6 6 L14 14" stroke="#d02020" stroke-width="1.2"/></svg><svg class="a" style="left:28px;top:365px" width="16" height="16" viewBox="0 0 16 16" shape-rendering="crispEdges"><path d="M2.5 1 V13.5 H15" fill="none" stroke="#d02020" stroke-width="1.3"/><path d="M2.5 9 V13.5 H6" fill="none" stroke="#208080" stroke-width="1.3"/></svg><svg class="a" style="left:28px;top:387px" width="16" height="16" viewBox="0 0 16 16" shape-rendering="crispEdges"><path d="M1 2.5 H14.5 V15 M1 6.5 H10.5 V15 M1 10.5 H6.5 V15" fill="none" stroke="#d02020" stroke-width="1.3"/></svg><svg class="a" style="left:28px;top:409px" width="16" height="16" viewBox="0 0 16 16" shape-rendering="crispEdges"><path d="M2 3 L14 14 M14 3 L2 14" stroke="#d02020" stroke-width="1.4"/></svg><div class="a" style="left:49px;top:68px;width:1306px;height:811px;background:#000"></div><svg class="a" style="left:49px;top:68px" width="1306" height="811" viewBox="49 68 1306 811" shape-rendering="crispEdges">
<g transform="translate(-853 0)">
<rect x="244.5" y="255.5" width="816" height="477" fill="none" stroke="#e6e682"/>
<rect x="300.5" y="360.5" width="580" height="246" fill="none" stroke="#c83232"/>
<rect x="334.5" y="330.5" width="595" height="322" fill="none" stroke="#3c78c8"/>
<g fill="none" stroke="#4cd64c" stroke-width="3"><path d="M969 296.5 H1040.5 V450 H1009 A9 9 0 0 0 1000.5 459 V504 A9 9 0 0 0 1009 513 H1040.5 V670.5 H994 L938 711.5 H588 L522 665.5 H325.5 V656.5 A9.5 9.5 0 0 0 306.5 656.5 V665.5 H280.5 V302.5 H306.5 V312 A9.5 9.5 0 0 0 325.5 312 V302.5 H542 L568 276.5"/><path d="M337.5 425 Q337.5 420.5 342 420.5 H353 Q357.5 420.5 357.5 425 V444 L347.5 454 V521 L357.5 531 V549 Q357.5 553.5 353 553.5 H342 Q337.5 553.5 337.5 549 Z"/><path d="M928.5 425 Q928.5 420.5 924 420.5 H912 Q907.5 420.5 907.5 425 V443 L917.5 452 V517 L907.5 526 V549 Q907.5 553.5 912 553.5 H924 Q928.5 553.5 928.5 549 Z"/><path d="M378 420.5 H886 Q891 420.5 891 425 V436 Q891 440.5 886 440.5 H866 L857 430.5 H408 L399 440 H378 Q373.5 440 373.5 435.5 V425 Q373.5 420.5 378 420.5 Z"/><path d="M378 553.5 H886 Q891 553.5 891 549 V538 Q891 533.5 886 533.5 H866 L857 543.5 H408 L399 533.5 H378 Q373.5 533.5 373.5 538 V549 Q373.5 553.5 378 553.5 Z"/><circle cx="670.5" cy="347.5" r="20.5"/><circle cx="670.5" cy="634.5" r="20.5"/></g>
<g fill="none" stroke="#000" stroke-width="1"><path d="M969 296.5 H1040.5 V450 H1009 A9 9 0 0 0 1000.5 459 V504 A9 9 0 0 0 1009 513 H1040.5 V670.5 H994 L938 711.5 H588 L522 665.5 H325.5 V656.5 A9.5 9.5 0 0 0 306.5 656.5 V665.5 H280.5 V302.5 H306.5 V312 A9.5 9.5 0 0 0 325.5 312 V302.5 H542 L568 276.5"/><path d="M337.5 425 Q337.5 420.5 342 420.5 H353 Q357.5 420.5 357.5 425 V444 L347.5 454 V521 L357.5 531 V549 Q357.5 553.5 353 553.5 H342 Q337.5 553.5 337.5 549 Z"/><path d="M928.5 425 Q928.5 420.5 924 420.5 H912 Q907.5 420.5 907.5 425 V443 L917.5 452 V517 L907.5 526 V549 Q907.5 553.5 912 553.5 H924 Q928.5 553.5 928.5 549 Z"/><path d="M378 420.5 H886 Q891 420.5 891 425 V436 Q891 440.5 886 440.5 H866 L857 430.5 H408 L399 440 H378 Q373.5 440 373.5 435.5 V425 Q373.5 420.5 378 420.5 Z"/><path d="M378 553.5 H886 Q891 553.5 891 549 V538 Q891 533.5 886 533.5 H866 L857 543.5 H408 L399 533.5 H378 Q373.5 533.5 373.5 538 V549 Q373.5 553.5 378 553.5 Z"/><circle cx="670.5" cy="347.5" r="20.5"/><circle cx="670.5" cy="634.5" r="20.5"/></g>
<path d="M568 277 L969 297" stroke="#4cd64c" stroke-width="2" fill="none"/><g fill="none" stroke="#4cd64c"><circle cx="311" cy="373" r="12.5"/><circle cx="370" cy="381" r="5.5"/><circle cx="415" cy="381" r="5.5"/><circle cx="542" cy="370" r="13.5"/><circle cx="871" cy="370" r="12.5"/></g>
</g>
<g transform="translate(0 0)">
<rect x="244.5" y="255.5" width="816" height="477" fill="none" stroke="#e6e682"/>
<rect x="300.5" y="360.5" width="580" height="246" fill="none" stroke="#c83232"/>
<rect x="334.5" y="330.5" width="595" height="322" fill="none" stroke="#3c78c8"/>
<g fill="none" stroke="#4cd64c" stroke-width="3"><path d="M969 296.5 H1040.5 V450 H1009 A9 9 0 0 0 1000.5 459 V504 A9 9 0 0 0 1009 513 H1040.5 V670.5 H994 L938 711.5 H588 L522 665.5 H325.5 V656.5 A9.5 9.5 0 0 0 306.5 656.5 V665.5 H280.5 V302.5 H306.5 V312 A9.5 9.5 0 0 0 325.5 312 V302.5 H542 L568 276.5"/><path d="M337.5 425 Q337.5 420.5 342 420.5 H353 Q357.5 420.5 357.5 425 V444 L347.5 454 V521 L357.5 531 V549 Q357.5 553.5 353 553.5 H342 Q337.5 553.5 337.5 549 Z"/><path d="M928.5 425 Q928.5 420.5 924 420.5 H912 Q907.5 420.5 907.5 425 V443 L917.5 452 V517 L907.5 526 V549 Q907.5 553.5 912 553.5 H924 Q928.5 553.5 928.5 549 Z"/><path d="M378 420.5 H886 Q891 420.5 891 425 V436 Q891 440.5 886 440.5 H866 L857 430.5 H408 L399 440 H378 Q373.5 440 373.5 435.5 V425 Q373.5 420.5 378 420.5 Z"/><path d="M378 553.5 H886 Q891 553.5 891 549 V538 Q891 533.5 886 533.5 H866 L857 543.5 H408 L399 533.5 H378 Q373.5 533.5 373.5 538 V549 Q373.5 553.5 378 553.5 Z"/><circle cx="670.5" cy="347.5" r="20.5"/><circle cx="670.5" cy="634.5" r="20.5"/></g>
<g fill="none" stroke="#000" stroke-width="1"><path d="M969 296.5 H1040.5 V450 H1009 A9 9 0 0 0 1000.5 459 V504 A9 9 0 0 0 1009 513 H1040.5 V670.5 H994 L938 711.5 H588 L522 665.5 H325.5 V656.5 A9.5 9.5 0 0 0 306.5 656.5 V665.5 H280.5 V302.5 H306.5 V312 A9.5 9.5 0 0 0 325.5 312 V302.5 H542 L568 276.5"/><path d="M337.5 425 Q337.5 420.5 342 420.5 H353 Q357.5 420.5 357.5 425 V444 L347.5 454 V521 L357.5 531 V549 Q357.5 553.5 353 553.5 H342 Q337.5 553.5 337.5 549 Z"/><path d="M928.5 425 Q928.5 420.5 924 420.5 H912 Q907.5 420.5 907.5 425 V443 L917.5 452 V517 L907.5 526 V549 Q907.5 553.5 912 553.5 H924 Q928.5 553.5 928.5 549 Z"/><path d="M378 420.5 H886 Q891 420.5 891 425 V436 Q891 440.5 886 440.5 H866 L857 430.5 H408 L399 440 H378 Q373.5 440 373.5 435.5 V425 Q373.5 420.5 378 420.5 Z"/><path d="M378 553.5 H886 Q891 553.5 891 549 V538 Q891 533.5 886 533.5 H866 L857 543.5 H408 L399 533.5 H378 Q373.5 533.5 373.5 538 V549 Q373.5 553.5 378 553.5 Z"/><circle cx="670.5" cy="347.5" r="20.5"/><circle cx="670.5" cy="634.5" r="20.5"/></g>
<path d="M568 277 L969 297" stroke="#4cd64c" stroke-width="2" fill="none"/><g fill="none" stroke="#4cd64c"><circle cx="311" cy="373" r="12.5"/><circle cx="370" cy="381" r="5.5"/><circle cx="415" cy="381" r="5.5"/><circle cx="542" cy="370" r="13.5"/><circle cx="871" cy="370" r="12.5"/></g>
</g>
<g transform="translate(853 0)">
<rect x="244.5" y="255.5" width="816" height="477" fill="none" stroke="#e6e682"/>
<rect x="300.5" y="360.5" width="580" height="246" fill="none" stroke="#c83232"/>
<rect x="334.5" y="330.5" width="595" height="322" fill="none" stroke="#3c78c8"/>
<g fill="none" stroke="#4cd64c" stroke-width="3"><path d="M969 296.5 H1040.5 V450 H1009 A9 9 0 0 0 1000.5 459 V504 A9 9 0 0 0 1009 513 H1040.5 V670.5 H994 L938 711.5 H588 L522 665.5 H325.5 V656.5 A9.5 9.5 0 0 0 306.5 656.5 V665.5 H280.5 V302.5 H306.5 V312 A9.5 9.5 0 0 0 325.5 312 V302.5 H542 L568 276.5"/><path d="M337.5 425 Q337.5 420.5 342 420.5 H353 Q357.5 420.5 357.5 425 V444 L347.5 454 V521 L357.5 531 V549 Q357.5 553.5 353 553.5 H342 Q337.5 553.5 337.5 549 Z"/><path d="M928.5 425 Q928.5 420.5 924 420.5 H912 Q907.5 420.5 907.5 425 V443 L917.5 452 V517 L907.5 526 V549 Q907.5 553.5 912 553.5 H924 Q928.5 553.5 928.5 549 Z"/><path d="M378 420.5 H886 Q891 420.5 891 425 V436 Q891 440.5 886 440.5 H866 L857 430.5 H408 L399 440 H378 Q373.5 440 373.5 435.5 V425 Q373.5 420.5 378 420.5 Z"/><path d="M378 553.5 H886 Q891 553.5 891 549 V538 Q891 533.5 886 533.5 H866 L857 543.5 H408 L399 533.5 H378 Q373.5 533.5 373.5 538 V549 Q373.5 553.5 378 553.5 Z"/><circle cx="670.5" cy="347.5" r="20.5"/><circle cx="670.5" cy="634.5" r="20.5"/></g>
<g fill="none" stroke="#000" stroke-width="1"><path d="M969 296.5 H1040.5 V450 H1009 A9 9 0 0 0 1000.5 459 V504 A9 9 0 0 0 1009 513 H1040.5 V670.5 H994 L938 711.5 H588 L522 665.5 H325.5 V656.5 A9.5 9.5 0 0 0 306.5 656.5 V665.5 H280.5 V302.5 H306.5 V312 A9.5 9.5 0 0 0 325.5 312 V302.5 H542 L568 276.5"/><path d="M337.5 425 Q337.5 420.5 342 420.5 H353 Q357.5 420.5 357.5 425 V444 L347.5 454 V521 L357.5 531 V549 Q357.5 553.5 353 553.5 H342 Q337.5 553.5 337.5 549 Z"/><path d="M928.5 425 Q928.5 420.5 924 420.5 H912 Q907.5 420.5 907.5 425 V443 L917.5 452 V517 L907.5 526 V549 Q907.5 553.5 912 553.5 H924 Q928.5 553.5 928.5 549 Z"/><path d="M378 420.5 H886 Q891 420.5 891 425 V436 Q891 440.5 886 440.5 H866 L857 430.5 H408 L399 440 H378 Q373.5 440 373.5 435.5 V425 Q373.5 420.5 378 420.5 Z"/><path d="M378 553.5 H886 Q891 553.5 891 549 V538 Q891 533.5 886 533.5 H866 L857 543.5 H408 L399 533.5 H378 Q373.5 533.5 373.5 538 V549 Q373.5 553.5 378 553.5 Z"/><circle cx="670.5" cy="347.5" r="20.5"/><circle cx="670.5" cy="634.5" r="20.5"/></g>
<path d="M568 277 L969 297" stroke="#4cd64c" stroke-width="2" fill="none"/><g fill="none" stroke="#4cd64c"><circle cx="311" cy="373" r="12.5"/><circle cx="370" cy="381" r="5.5"/><circle cx="415" cy="381" r="5.5"/><circle cx="542" cy="370" r="13.5"/><circle cx="871" cy="370" r="12.5"/></g>
</g>
<g fill="none" stroke="#fff">
<path d="M164 69.5 H190 M168.5 69.5 V78.5 H186.5 V69.5 M177.5 69 V82"/>
<path d="M223 70.5 H249 M227.5 70.5 V79.5 H245.5 V70.5 M236.5 70 V82"/>
</g>
<g>
<path d="M270 656 L290 676 M290 656 L270 676" stroke="#b040c0"/>
<path d="M250 687.5 L270 707.5 M270 687.5 L250 707.5" stroke="#e6e682"/>
</g>
<g fill="#fff" font-family="Liberation Sans" font-size="17">
<text x="590" y="500">drl</text><text x="617" y="508">1.0mm</text><text x="636" y="510">2.0mm</text>
</g>
</svg><div class="a" style="left:1355px;top:68px;width:2px;height:811px;background:#fff"></div><div class="a" style="left:1357px;top:67px;width:243px;height:812px;background:#808080"></div><div class="a" style="left:1357px;top:67px;width:242px;height:75px;background:#f0f0f0;border-top:1px solid #a0a0a0"></div><div class="a" style="left:1599px;top:67px;width:1px;height:812px;background:#f0f0f0"></div><div class="a" style="left:1360px;top:70px;width:64px;height:19px;background:#1a7878"></div><div class="a" style="left:1364px;top:69px;font:italic bold 15px/20px 'Liberation Sans',sans-serif;color:#fff;text-shadow:1px 1px 0 #000,-1px 0 0 #000,0 -1px 0 #000,1px 0 0 #000,0 1px 0 #000,2px 2px 0 #000;letter-spacing:.5px">Router</div><div class="a" style="left:1478px;top:71px;width:19px;height:19px;background:#a6d0f8;border:1px solid #1040b0;border-radius:2px"></div><svg class="a" style="left:1479px;top:72px" width="17" height="17" viewBox="0 0 17 17" ><rect x="4.5" y="6.5" width="5" height="5" fill="none" stroke="#1040c0"/><path d="M11 3 L16 8.5 L11 14 Z" fill="#e02040"/></svg><div class="a" style="left:1502px;top:71px;width:19px;height:19px;background:#a6d0f8;border:1px solid #1040b0;border-radius:2px"></div><svg class="a" style="left:1503px;top:72px" width="17" height="17" viewBox="0 0 17 17" ><rect x="5.5" y="5.5" width="6" height="6" fill="none" stroke="#1040c0" stroke-width="1.2"/><path d="M8.5 1 L11 4 H6 Z M8.5 16 L11 13 H6 Z M1 8.5 L4 6 V11 Z M16 8.5 L13 6 V11 Z" fill="#1040c0"/></svg><div class="a" style="left:1527px;top:71px;width:19px;height:19px;background:#a6d0f8;border:1px solid #1040b0;border-radius:2px"></div><svg class="a" style="left:1528px;top:72px" width="17" height="17" viewBox="0 0 17 17" ><path d="M3 9 Q3 4 8 4 H12 M14 8 Q14 13 9 13 H5" fill="none" stroke="#1040c0" stroke-width="1.2"/><path d="M11 2 L13 4 L11 6 M6 11 L4 13 L6 15" fill="none" stroke="#1040c0"/></svg><div class="a" style="left:1551px;top:71px;width:19px;height:19px;background:#a6d0f8;border:1px solid #1040b0;border-radius:2px"></div><svg class="a" style="left:1552px;top:72px" width="17" height="17" viewBox="0 0 17 17" ><path d="M2 3 H9 M2 6 H9" stroke="#1040c0" stroke-width="1.6"/><rect x="10.5" y="10.5" width="5" height="5" rx="1.5" fill="none" stroke="#1040c0"/></svg><div class="a" style="left:1576px;top:71px;width:19px;height:19px;background:#a6d0f8;border:1px solid #1040b0;border-radius:2px"></div><svg class="a" style="left:1577px;top:72px" width="17" height="17" viewBox="0 0 17 17" ><path d="M2 3 H10 M2 6 H10" stroke="#1040c0" stroke-width="1.6"/><path d="M10 10 L15 15 M15 10 L10 15" stroke="#1040c0"/></svg><div class="a" style="left:1359px;top:95px;width:19px;height:19px;background:#a6d0f8;border:1px solid #1040b0;border-radius:2px"></div><svg class="a" style="left:1360px;top:96px" width="17" height="17" viewBox="0 0 17 17" ><text x="3" y="14" font-family="Liberation Serif" font-weight="bold" font-size="15" fill="#3070e0">Z</text></svg><div class="a" style="left:1383px;top:95px;width:19px;height:19px;background:#a6d0f8;border:1px solid #6080b0;border-radius:2px"></div><svg class="a" style="left:1384px;top:96px" width="17" height="17" viewBox="0 0 17 17" ><circle cx="3" cy="3" r=".8" fill="#6080a0"/><circle cx="3" cy="6" r=".8" fill="#6080a0"/><circle cx="3" cy="9" r=".8" fill="#6080a0"/><circle cx="3" cy="12" r=".8" fill="#6080a0"/><circle cx="3" cy="15" r=".8" fill="#6080a0"/><circle cx="6" cy="3" r=".8" fill="#6080a0"/><circle cx="6" cy="6" r=".8" fill="#6080a0"/><circle cx="6" cy="9" r=".8" fill="#6080a0"/><circle cx="6" cy="12" r=".8" fill="#6080a0"/><circle cx="6" cy="15" r=".8" fill="#6080a0"/><circle cx="9" cy="3" r=".8" fill="#6080a0"/><circle cx="9" cy="6" r=".8" fill="#6080a0"/><circle cx="9" cy="9" r=".8" fill="#6080a0"/><circle cx="9" cy="12" r=".8" fill="#6080a0"/><circle cx="9" cy="15" r=".8" fill="#6080a0"/><circle cx="12" cy="3" r=".8" fill="#6080a0"/><circle cx="12" cy="6" r=".8" fill="#6080a0"/><circle cx="12" cy="9" r=".8" fill="#6080a0"/><circle cx="12" cy="12" r=".8" fill="#6080a0"/><circle cx="12" cy="15" r=".8" fill="#6080a0"/><circle cx="15" cy="3" r=".8" fill="#6080a0"/><circle cx="15" cy="6" r=".8" fill="#6080a0"/><circle cx="15" cy="9" r=".8" fill="#6080a0"/><circle cx="15" cy="12" r=".8" fill="#6080a0"/><circle cx="15" cy="15" r=".8" fill="#6080a0"/></svg><div class="a" style="left:1406px;top:95px;width:19px;height:19px;background:#a6d0f8;border:1px solid #6080b0;border-radius:2px"></div><svg class="a" style="left:1407px;top:96px" width="17" height="17" viewBox="0 0 17 17" ><circle cx="3" cy="3" r=".8" fill="#6080a0"/><circle cx="3" cy="6" r=".8" fill="#6080a0"/><circle cx="3" cy="9" r=".8" fill="#6080a0"/><circle cx="3" cy="12" r=".8" fill="#6080a0"/><circle cx="3" cy="15" r=".8" fill="#6080a0"/><circle cx="6" cy="3" r=".8" fill="#6080a0"/><circle cx="6" cy="6" r=".8" fill="#6080a0"/><circle cx="6" cy="9" r=".8" fill="#6080a0"/><circle cx="6" cy="12" r=".8" fill="#6080a0"/><circle cx="6" cy="15" r=".8" fill="#6080a0"/><circle cx="9" cy="3" r=".8" fill="#6080a0"/><circle cx="9" cy="6" r=".8" fill="#6080a0"/><circle cx="9" cy="9" r=".8" fill="#6080a0"/><circle cx="9" cy="12" r=".8" fill="#6080a0"/><circle cx="9" cy="15" r=".8" fill="#6080a0"/><circle cx="12" cy="3" r=".8" fill="#6080a0"/><circle cx="12" cy="6" r=".8" fill="#6080a0"/><circle cx="12" cy="9" r=".8" fill="#6080a0"/><circle cx="12" cy="12" r=".8" fill="#6080a0"/><circle cx="12" cy="15" r=".8" fill="#6080a0"/><circle cx="15" cy="3" r=".8" fill="#6080a0"/><circle cx="15" cy="6" r=".8" fill="#6080a0"/><circle cx="15" cy="9" r=".8" fill="#6080a0"/><circle cx="15" cy="12" r=".8" fill="#6080a0"/><circle cx="15" cy="15" r=".8" fill="#6080a0"/><path d="M6 6 V14 H14 Z" fill="none" stroke="#6080a0"/></svg><div class="a" style="left:1429px;top:95px;width:19px;height:19px;background:#a6d0f8;border:1px solid #1040b0;border-radius:2px"></div><svg class="a" style="left:1430px;top:96px" width="17" height="17" viewBox="0 0 17 17" ><rect x="2.5" y="2.5" width="8" height="9" fill="none" stroke="#1040c0" stroke-width="1.2"/><path d="M8 7 L15 14 L11 14 L9 16 Z" fill="#fff" stroke="#333" stroke-width=".6"/></svg><div class="a" style="left:1453px;top:95px;width:19px;height:19px;background:#a6d0f8;border:1px solid #6080b0;border-radius:2px"></div><svg class="a" style="left:1454px;top:96px" width="17" height="17" viewBox="0 0 17 17" ><path d="M2 5 L4 3 M2 12 L4 14 M15 5 L13 3 M15 12 L13 14 M3 3 H5 M12 3 H14 M3 14 H5 M12 14 H14" stroke="#6080b0" stroke-width="1.2" fill="none"/></svg><div class="a" style="left:1502px;top:95px;width:19px;height:19px;background:#a6d0f8;border:1px solid #1040b0;border-radius:2px"></div><svg class="a" style="left:1503px;top:96px" width="17" height="17" viewBox="0 0 17 17" ><path d="M3 13 L12 3 Q14 2 15 4 L6 14 Q4 15 3 13 Z" fill="#c8e4fc" stroke="#222"/></svg><div class="a" style="left:1527px;top:95px;width:19px;height:19px;background:#a6d0f8;border:1px solid #1040b0;border-radius:2px"></div><svg class="a" style="left:1528px;top:96px" width="17" height="17" viewBox="0 0 17 17" ><rect x="1" y="2" width="15" height="3" fill="#1040c0"/><rect x="1" y="7" width="15" height="3" fill="#1040c0"/><rect x="1" y="12" width="15" height="3" fill="#1040c0"/></svg><div class="a" style="left:1551px;top:95px;width:19px;height:19px;background:#a6d0f8;border:1px solid #1040b0;border-radius:2px"></div><svg class="a" style="left:1552px;top:96px" width="17" height="17" viewBox="0 0 17 17" ><rect x="1.5" y="2.5" width="10" height="4" fill="none" stroke="#1040c0"/><circle cx="11.5" cy="12" r="3.5" fill="none" stroke="#1040c0"/></svg><div class="a" style="left:1576px;top:95px;width:19px;height:19px;background:#a6d0f8;border:1px solid #1040b0;border-radius:2px"></div><svg class="a" style="left:1577px;top:96px" width="17" height="17" viewBox="0 0 17 17" ><path d="M2.5 2.5 H12.5 V9 M2.5 2.5 V13.5 H9" fill="none" stroke="#1040c0" stroke-width="1.2"/><path d="M8 11 H16 L12 15 Z" fill="#1040c0"/></svg><div class="a" style="left:1357px;top:117px;width:242px;height:1px;background:#c8c8c8"></div><div class="a" style="left:1358px;top:122px;width:29px;height:16px;background:#cce8ff;border:1px solid #2070c8"></div><div class="t" style="left:1361px;top:122px;font-size:12px;color:#000;transform:scaleX(0.9161);width:25.0px;overflow:hidden;">ABS</div><div class="a" style="left:1389px;top:122px;width:28px;height:16px;background:#e1e1e1;border:1px solid #adadad"></div><div class="t" style="left:1392px;top:122px;font-size:12px;color:#000;transform:scaleX(0.9675);width:21.7px;overflow:hidden;">INC</div><div class="t" style="left:1428px;top:122px;font-size:13px;color:#000;transform:scaleX(1.0378);width:9.7px;overflow:hidden;">X</div><div class="a" style="left:1443px;top:121px;width:51px;height:18px;background:#fff;border:1px solid #adadad"></div><div class="t" style="left:1447px;top:122px;font-size:12px;color:#000;transform:scaleX(0.8758);width:44.4px;overflow:hidden;">321.404</div><div class="t" style="left:1501px;top:122px;font-size:13px;color:#000;transform:scaleX(1.0378);width:9.7px;overflow:hidden;">Y</div><div class="a" style="left:1514px;top:121px;width:51px;height:18px;background:#fff;border:1px solid #adadad"></div><div class="t" style="left:1518px;top:122px;font-size:12px;color:#000;transform:scaleX(0.8758);width:44.4px;overflow:hidden;">235.835</div><div class="a" style="left:1570px;top:120px;width:27px;height:21px;background:#f0f0f0;border-top:1px solid #fff;border-left:1px solid #fff;border-right:2px solid #808080;border-bottom:2px solid #808080"></div><svg class="a" style="left:1577px;top:123px" width="13" height="15" viewBox="0 0 13 15" ><path d="M6.5 .5 Q.5 .5 .5 6 V10 Q.5 14.5 6.5 14.5 Q12.5 14.5 12.5 10 V6 Q12.5 .5 6.5 .5 Z M.5 6.5 H12.5 M6.5 .5 V6.5" fill="none" stroke="#000"/></svg><div class="a" style="left:1357px;top:141px;width:242px;height:2px;background:#a0a0a0"></div><div class="a" style="left:1357px;top:141px;width:2px;height:101px;background:#a0a0a0"></div><div class="a" style="left:1359px;top:143px;width:238px;height:24px;background:#fff"></div><div class="a" style="left:1402px;top:143px;width:1px;height:24px;background:#e8e8e8"></div><div class="a" style="left:1512px;top:143px;width:1px;height:24px;background:#e8e8e8"></div><div class="a" style="left:1534px;top:143px;width:1px;height:24px;background:#e8e8e8"></div><div class="a" style="left:1556px;top:143px;width:1px;height:24px;background:#e8e8e8"></div><div class="a" style="left:1578px;top:143px;width:1px;height:24px;background:#e8e8e8"></div><div class="t" style="left:1365px;top:147px;font-size:12px;color:#000;transform:scaleX(0.9583);width:25.0px;overflow:hidden;">属性</div><div class="t" style="left:1408.7px;top:147px;font-size:12px;color:#000;transform:scaleX(0.9750);width:25.0px;overflow:hidden;">名称</div><div class="t" style="left:1519px;top:146px;font-size:12px;color:#000;transform:scaleX(0.9532);width:8.3px;overflow:hidden;">F</div><div class="t" style="left:1541px;top:146px;font-size:12px;color:#000;transform:scaleX(0.9225);width:9.7px;overflow:hidden;">D</div><div class="t" style="left:1563px;top:146px;font-size:12px;color:#000;transform:scaleX(0.9981);width:9.0px;overflow:hidden;">A</div><div class="a" style="left:1359px;top:167px;width:43px;height:18.5px;background:#f0f0f0;border-right:2px solid #909090;border-bottom:2px solid #909090"></div><div class="a" style="left:1403px;top:167px;width:109px;height:18.5px;background:#f0f0f0;border-right:2px solid #909090;border-bottom:2px solid #909090"></div><div class="a" style="left:1513px;top:167px;width:21px;height:18.5px;background:#f0f0f0;border-right:1px solid #909090;border-bottom:2px solid #909090"></div><div class="a" style="left:1535px;top:167px;width:21px;height:18.5px;background:#f0f0f0;border-right:1px solid #909090;border-bottom:2px solid #909090"></div><div class="a" style="left:1557px;top:167px;width:21px;height:18.5px;background:#f0f0f0;border-right:1px solid #909090;border-bottom:2px solid #909090"></div><div class="t" style="left:1365px;top:165px;font-size:12px;color:#000;transform:scaleX(0.7857);width:16.8px;overflow:hidden;">RT</div><div class="t" style="left:1408.7px;top:165px;font-size:12px;color:#000;transform:scaleX(0.8618);width:57.0px;overflow:hidden;">Router_#1</div><div class="t" style="left:1519px;top:165px;font-size:12px;color:#000;transform:scaleX(0.9532);width:8.3px;overflow:hidden;">T</div><div class="t" style="left:1541px;top:165px;font-size:12px;color:#000;transform:scaleX(0.9532);width:8.3px;overflow:hidden;">T</div><div class="t" style="left:1563px;top:165px;font-size:12px;color:#000;transform:scaleX(0.9532);width:8.3px;overflow:hidden;">T</div><div class="a" style="left:1359px;top:186px;width:43px;height:18.5px;background:#f0f0f0;border-right:2px solid #909090;border-bottom:2px solid #909090"></div><div class="a" style="left:1403px;top:186px;width:109px;height:18.5px;background:#f0f0f0;border-right:2px solid #909090;border-bottom:2px solid #909090"></div><div class="a" style="left:1513px;top:186px;width:21px;height:18.5px;background:#f0f0f0;border-right:1px solid #909090;border-bottom:2px solid #909090"></div><div class="a" style="left:1515px;top:188px;width:17px;height:15px;background:#00e000;border:1px solid #202020"></div><div class="a" style="left:1535px;top:186px;width:21px;height:18.5px;background:#f0f0f0;border-right:1px solid #909090;border-bottom:2px solid #909090"></div><div class="a" style="left:1537px;top:188px;width:17px;height:15px;background:#00e000;border:1px solid #202020"></div><div class="a" style="left:1557px;top:186px;width:21px;height:18.5px;background:#f0f0f0;border-right:1px solid #909090;border-bottom:2px solid #909090"></div><div class="a" style="left:1559px;top:188px;width:17px;height:15px;background:#00e000;border:1px solid #202020"></div><div class="a" style="left:1359px;top:186px;width:43px;height:18.5px;background:#00ffff;border-bottom:2px solid #909090"></div><div class="t" style="left:1365px;top:184px;font-size:12px;color:#2050e0;transform:scaleX(0.8360);width:18.3px;overflow:hidden;">GB</div><div class="t" style="left:1408.7px;top:184px;font-size:12px;color:#000;transform:scaleX(0.9094);width:82.4px;overflow:hidden;">Routerxxx2.gbr</div><div class="a" style="left:1359px;top:204.5px;width:43px;height:18.5px;background:#f0f0f0;border-right:2px solid #909090;border-bottom:2px solid #909090"></div><div class="a" style="left:1403px;top:204.5px;width:109px;height:18.5px;background:#f0f0f0;border-right:2px solid #909090;border-bottom:2px solid #909090"></div><div class="a" style="left:1513px;top:204.5px;width:21px;height:18.5px;background:#f0f0f0;border-right:1px solid #909090;border-bottom:2px solid #909090"></div><div class="a" style="left:1515px;top:206.5px;width:17px;height:15px;background:#800080;border:1px solid #202020"></div><div class="a" style="left:1535px;top:204.5px;width:21px;height:18.5px;background:#f0f0f0;border-right:1px solid #909090;border-bottom:2px solid #909090"></div><div class="a" style="left:1537px;top:206.5px;width:17px;height:15px;background:#800080;border:1px solid #202020"></div><div class="a" style="left:1557px;top:204.5px;width:21px;height:18.5px;background:#f0f0f0;border-right:1px solid #909090;border-bottom:2px solid #909090"></div><div class="a" style="left:1559px;top:206.5px;width:17px;height:15px;background:#800080;border:1px solid #202020"></div><div class="t" style="left:1365px;top:202.5px;font-size:12px;color:#000;transform:scaleX(0.8170);width:15.7px;overflow:hidden;">AL</div><div class="t" style="left:1408.7px;top:202.5px;font-size:12px;color:#000;transform:scaleX(0.8924);width:57.0px;overflow:hidden;">補助線_#1</div><div class="a" style="left:1359px;top:223.5px;width:43px;height:18.5px;background:#f0f0f0;border-right:2px solid #909090;border-bottom:2px solid #909090"></div><div class="a" style="left:1403px;top:223.5px;width:109px;height:18.5px;background:#f0f0f0;border-right:2px solid #909090;border-bottom:2px solid #909090"></div><div class="a" style="left:1513px;top:223.5px;width:21px;height:18.5px;background:#f0f0f0;border-right:1px solid #909090;border-bottom:2px solid #909090"></div><div class="a" style="left:1515px;top:225.5px;width:17px;height:15px;background:#00ffff;border:1px solid #202020"></div><div class="a" style="left:1535px;top:223.5px;width:21px;height:18.5px;background:#f0f0f0;border-right:1px solid #909090;border-bottom:2px solid #909090"></div><div class="a" style="left:1537px;top:225.5px;width:17px;height:15px;background:#00ffff;border:1px solid #202020"></div><div class="a" style="left:1557px;top:223.5px;width:21px;height:18.5px;background:#f0f0f0;border-right:1px solid #909090;border-bottom:2px solid #909090"></div><div class="a" style="left:1559px;top:225.5px;width:17px;height:15px;background:#00ffff;border:1px solid #202020"></div><div class="t" style="left:1365px;top:221.5px;font-size:12px;color:#000;transform:scaleX(0.7798);width:17.7px;overflow:hidden;">ML</div><div class="t" style="left:1408.7px;top:221.5px;font-size:12px;color:#000;transform:scaleX(0.8924);width:57.0px;overflow:hidden;">寸法線_#1</div><div class="a" style="left:0px;top:879px;width:1600px;height:21px;background:#f0f0f0;border-top:1px solid #fff"></div><div class="t" style="left:2px;top:883px;font-size:12px;color:#000;transform:scaleX(0.8304);width:455.0px;overflow:hidden;">ルーター出力原点：左クリックで出力原点を指定...右クリックでコマンドキャンセル</div><div class="a" style="left:1399px;top:884px;width:148px;height:16px;border-top:1px solid #a0a0a0;border-left:1px solid #a0a0a0;border-right:1px solid #fff;background:#e4e4e4"></div><div class="t" style="left:1422px;top:884px;font-size:12px;color:#000;transform:scaleX(0.9257);width:113.3px;overflow:hidden;">X 240.952  Y 256.140</div><div class="a" style="left:1551px;top:884px;width:47px;height:16px;border-top:1px solid #a0a0a0;border-left:1px solid #a0a0a0;border-right:1px solid #fff;background:#e4e4e4"></div><div class="t" style="left:1565px;top:884px;font-size:12px;color:#000;transform:scaleX(0.8500);width:21.0px;overflow:hidden;">mm</div><div class="a" style="left:805px;top:397px;width:784px;height:443px;background:#fff;box-shadow:0 0 0 1px rgba(0,0,0,.25),2px 4px 14px rgba(0,0,0,.55)"></div><svg class="a" style="left:813px;top:403px" width="17" height="16" viewBox="0 0 17 16" ><path d="M.5 2.5 H5 L6 .5 H12 L13 2.5 H15.5 V14 L14 15.5 H11 L10 14 H6 L5 15.5 H.5 Z" fill="#f8f090" stroke="#000"/><path d="M3 6 H13 M3 8.5 H13 M3 11 H13" stroke="#000"/></svg><div class="t" style="left:835px;top:403.5px;font-size:12px;color:#000;transform:scaleX(0.9465);width:95.0px;overflow:hidden;">出力設定 v1.1.2.3</div><svg class="a" style="left:1462px;top:400px" width="120" height="22" viewBox="0 0 120 22" ><path d="M8 11.5 H18" stroke="#000"/>
<rect x="53.5" y="6.5" width="10" height="10" fill="none" stroke="#000"/>
<path d="M98 6 L109 17 M109 6 L98 17" stroke="#000"/></svg><div class="t" style="left:812.6px;top:428.5px;font-size:12px;color:#222;transform:scaleX(0.7343);width:64.3px;overflow:hidden;">ファイル(F)</div><div class="t" style="left:875px;top:428.5px;font-size:12px;color:#222;transform:scaleX(0.9375);width:65.0px;overflow:hidden;">出力設定(S)</div><div class="t" style="left:950px;top:428.5px;font-size:12px;color:#222;transform:scaleX(0.9500);width:41.0px;overflow:hidden;">表示(V)</div><div class="a" style="left:805px;top:447px;width:784px;height:27px;background:#f0f0f0;border-top:1px solid #c0c0c0"></div><div class="a" style="left:809px;top:452px;width:2px;height:19px;border-left:1px solid #fff;border-right:1px solid #a0a0a0"></div><svg class="a" style="left:820px;top:453px" width="16" height="16" viewBox="0 0 16 16" shape-rendering="crispEdges"><path d="M1.5 .5 H8.5 L11.5 3.5 V15.5 H1.5 Z" fill="#fff" stroke="#000"/><path d="M8.5 .5 V3.5 H11.5" fill="none" stroke="#000"/></svg><svg class="a" style="left:841px;top:453px" width="16" height="16" viewBox="0 0 16 16" shape-rendering="crispEdges"><rect x=".5" y=".5" width="14" height="15" fill="#808030" stroke="#000"/><rect x="3" y="1" width="9" height="6" fill="#e8e8e8"/><rect x="2" y="10" width="11" height="5" fill="#000"/><rect x="9" y="11" width="2" height="3" fill="#fff"/></svg><div class="a" style="left:862px;top:454px;width:2px;height:18px;border-left:1px solid #a0a0a0;border-right:1px solid #fff"></div><svg class="a" style="left:869px;top:454px" width="16" height="16" viewBox="0 0 16 16" shape-rendering="crispEdges"><rect x=".5" y="1.5" width="12" height="8" fill="#fff" stroke="#000"/><path d="M3 4 H6 M8 4 H11 M3 6.5 H6 M8 6.5 H11" stroke="#888"/><path d="M9 13 L14 6 L16 8 L11 14 Z" fill="#f0d020" stroke="#000" stroke-width=".8"/><path d="M3 14.5 H8" stroke="#000" stroke-dasharray="1 1"/></svg><div class="a" style="left:891px;top:454px;width:2px;height:18px;border-left:1px solid #a0a0a0;border-right:1px solid #fff"></div><svg class="a" style="left:898px;top:454px" width="16" height="16" viewBox="0 0 16 16" shape-rendering="crispEdges"><rect x=".5" y="1.5" width="5" height="3" rx="1" fill="#f8f090" stroke="#000"/><path d="M3 4.5 V13.5 H7 M3 8.5 H7" fill="none" stroke="#000"/><rect x="7.5" y="2.5" width="7" height="3" rx="1" fill="#f8f090" stroke="#000"/><rect x="7.5" y="7.5" width="7" height="3" rx="1" fill="#f8f090" stroke="#000"/><rect x="7.5" y="12" width="7" height="3" rx="1" fill="#f8f090" stroke="#000"/></svg><svg class="a" style="left:921px;top:454px" width="16" height="16" viewBox="0 0 16 16" shape-rendering="crispEdges"><rect x=".5" y="1.5" width="5" height="3" rx="1" fill="#f8f090" stroke="#000"/><path d="M3 4.5 V13.5 H7 M3 8.5 H7" fill="none" stroke="#000"/><rect x="7.5" y="2.5" width="7" height="3" rx="1" fill="#f8f090" stroke="#000"/><rect x="7.5" y="7.5" width="7" height="3" rx="1" fill="#f8f090" stroke="#000"/><rect x="7.5" y="12" width="7" height="3" rx="1" fill="#f8f090" stroke="#000"/><path d="M5 9 L13 16 M13 9 L5 16" stroke="#c02000" stroke-width="1.5"/></svg><svg class="a" style="left:945px;top:454px" width="16" height="16" viewBox="0 0 16 16" shape-rendering="crispEdges"><rect x=".5" y=".5" width="8" height="10" fill="#fff" stroke="#000080"/><rect x="5.5" y="4.5" width="9" height="10" fill="#fff" stroke="#000080"/><path d="M2 3 H7 M2 5 H5 M7 7 H13 M7 9 H13 M7 11 H13" stroke="#000080"/></svg><div class="a" style="left:992px;top:449px;width:2px;height:23px;border-left:1px solid #a0a0a0;border-right:1px solid #fff"></div><div class="a" style="left:997px;top:452px;width:2px;height:19px;border-left:1px solid #fff;border-right:1px solid #a0a0a0"></div><div class="a" style="left:1002px;top:451px;width:245px;height:19px;background:#fff;border-top:2px solid #a0a0a0;border-left:2px solid #a0a0a0;border-bottom:1px solid #e0e0e0;border-right:1px solid #e0e0e0"></div><div class="a" style="left:1229px;top:453px;width:17px;height:16px;background:#f0f0f0;border-top:1px solid #fff;border-left:1px solid #fff;border-right:1px solid #707070;border-bottom:1px solid #707070"></div><svg class="a" style="left:1233px;top:459px" width="9" height="5" viewBox="0 0 9 5" ><path d="M0 0 H9 L4.5 5 Z" fill="#000"/></svg><div class="t" style="left:1006px;top:453px;font-size:12px;color:#000;transform:scaleX(0.9433);width:78.4px;overflow:hidden;">2 : hitachi G81</div><div class="t" style="left:1282px;top:452px;font-size:12px;color:#000;transform:scaleX(1.0000);width:61.0px;overflow:hidden;">出力設定名</div><div class="a" style="left:1349px;top:451px;width:232px;height:20px;background:#fff;border-top:2px solid #a0a0a0;border-left:2px solid #a0a0a0;border-bottom:1px solid #e0e0e0;border-right:1px solid #e0e0e0"></div><div class="t" style="left:1353px;top:452.5px;font-size:12px;color:#000;transform:scaleX(0.9398);width:85.1px;overflow:hidden;">99 : hitachi G81</div><div class="a" style="left:805px;top:474px;width:784px;height:366px;background:#f0f0f0"></div><div class="a" style="left:806px;top:474px;width:402px;height:346px;background:#fff;border-top:2px solid #909090;border-left:1px solid #707070;border-right:1px solid #e0e0e0;border-bottom:1px solid #fff"></div><svg class="a" style="left:806px;top:476px" width="140" height="110" viewBox="0 0 140 110" ><g stroke="#808080" stroke-dasharray="1 1" fill="none">
<path d="M15 8.5 H21 M29.5 14 V98 M29.5 26 H40 M29.5 44 H40 M29.5 62 H40 M29.5 80 H40 M29.5 98 H40"/></g></svg><div class="a" style="left:811px;top:480px;width:9px;height:9px;background:#fff;border:1px solid #808080"></div><div class="a" style="left:813px;top:484px;width:5px;height:1px;background:#000"></div><svg class="a" style="left:827px;top:477px" width="16" height="16" viewBox="0 0 16 16" shape-rendering="crispEdges"><rect x=".5" y="1.5" width="14" height="12" fill="#5050d0" stroke="#202060"/><g fill="#a0a0ff"><rect x="1" y="3" width="1" height="1"/><rect x="2" y="4" width="1" height="1"/><rect x="1" y="5" width="1" height="1"/><rect x="2" y="6" width="1" height="1"/><rect x="1" y="7" width="1" height="1"/><rect x="2" y="8" width="1" height="1"/><rect x="1" y="9" width="1" height="1"/><rect x="2" y="10" width="1" height="1"/><rect x="1" y="11" width="1" height="1"/><rect x="2" y="12" width="1" height="1"/><rect x="3" y="3" width="1" height="1"/><rect x="4" y="4" width="1" height="1"/><rect x="3" y="5" width="1" height="1"/><rect x="4" y="6" width="1" height="1"/><rect x="3" y="7" width="1" height="1"/><rect x="4" y="8" width="1" height="1"/><rect x="3" y="9" width="1" height="1"/><rect x="4" y="10" width="1" height="1"/><rect x="3" y="11" width="1" height="1"/><rect x="4" y="12" width="1" height="1"/><rect x="5" y="3" width="1" height="1"/><rect x="6" y="4" width="1" height="1"/><rect x="5" y="5" width="1" height="1"/><rect x="6" y="6" width="1" height="1"/><rect x="5" y="7" width="1" height="1"/><rect x="6" y="8" width="1" height="1"/><rect x="5" y="9" width="1" height="1"/><rect x="6" y="10" width="1" height="1"/><rect x="5" y="11" width="1" height="1"/><rect x="6" y="12" width="1" height="1"/><rect x="7" y="3" width="1" height="1"/><rect x="8" y="4" width="1" height="1"/><rect x="7" y="5" width="1" height="1"/><rect x="8" y="6" width="1" height="1"/><rect x="7" y="7" width="1" height="1"/><rect x="8" y="8" width="1" height="1"/><rect x="7" y="9" width="1" height="1"/><rect x="8" y="10" width="1" height="1"/><rect x="7" y="11" width="1" height="1"/><rect x="8" y="12" width="1" height="1"/><rect x="9" y="3" width="1" height="1"/><rect x="10" y="4" width="1" height="1"/><rect x="9" y="5" width="1" height="1"/><rect x="10" y="6" width="1" height="1"/><rect x="9" y="7" width="1" height="1"/><rect x="10" y="8" width="1" height="1"/><rect x="9" y="9" width="1" height="1"/><rect x="10" y="10" width="1" height="1"/><rect x="9" y="11" width="1" height="1"/><rect x="10" y="12" width="1" height="1"/><rect x="11" y="3" width="1" height="1"/><rect x="12" y="4" width="1" height="1"/><rect x="11" y="5" width="1" height="1"/><rect x="12" y="6" width="1" height="1"/><rect x="11" y="7" width="1" height="1"/><rect x="12" y="8" width="1" height="1"/><rect x="11" y="9" width="1" height="1"/><rect x="12" y="10" width="1" height="1"/><rect x="11" y="11" width="1" height="1"/><rect x="12" y="12" width="1" height="1"/><rect x="13" y="3" width="1" height="1"/><rect x="14" y="4" width="1" height="1"/><rect x="13" y="5" width="1" height="1"/><rect x="14" y="6" width="1" height="1"/><rect x="13" y="7" width="1" height="1"/><rect x="14" y="8" width="1" height="1"/><rect x="13" y="9" width="1" height="1"/><rect x="14" y="10" width="1" height="1"/><rect x="13" y="11" width="1" height="1"/><rect x="14" y="12" width="1" height="1"/></g><path d="M4 11 L11 5" stroke="#fff" stroke-width="2"/><path d="M4 11 L11 5" stroke="#000" stroke-width=".8"/></svg><div class="a" style="left:845px;top:475px;width:63px;height:18px;background:#0078d7;outline:1px dotted #000;outline-offset:-1px"></div><div class="t" style="left:847px;top:476px;font-size:12px;color:#fff;transform:scaleX(0.9555);width:61.7px;overflow:hidden;">hitachi G81</div><div class="a" style="left:830px;top:498px;width:9px;height:9px;background:#fff;border:1px solid #808080"></div><div class="a" style="left:832px;top:502px;width:5px;height:1px;background:#000"></div><div class="a" style="left:834px;top:500px;width:1px;height:5px;background:#000"></div><svg class="a" style="left:846px;top:495px" width="15" height="15" viewBox="0 0 15 15" shape-rendering="crispEdges"><path d="M.5 13.5 V2 L2 .5 H6 L7.5 2.5 H13.5 V13.5 Z" fill="#3434b8" stroke="#303048"/><path d="M1.5 13.5 H14.5 V3.5" fill="none" stroke="#606078"/><path d="M1 3.5 H13" stroke="#b0b0e8"/><g fill="#a0a0f0"><rect x="1" y="5" width="1" height="1"/><rect x="2" y="6" width="1" height="1"/><rect x="1" y="7" width="1" height="1"/><rect x="2" y="8" width="1" height="1"/><rect x="1" y="9" width="1" height="1"/><rect x="2" y="10" width="1" height="1"/><rect x="1" y="11" width="1" height="1"/><rect x="2" y="12" width="1" height="1"/><rect x="3" y="5" width="1" height="1"/><rect x="4" y="6" width="1" height="1"/><rect x="3" y="7" width="1" height="1"/><rect x="4" y="8" width="1" height="1"/><rect x="3" y="9" width="1" height="1"/><rect x="4" y="10" width="1" height="1"/><rect x="3" y="11" width="1" height="1"/><rect x="4" y="12" width="1" height="1"/><rect x="5" y="5" width="1" height="1"/><rect x="6" y="6" width="1" height="1"/><rect x="5" y="7" width="1" height="1"/><rect x="6" y="8" width="1" height="1"/><rect x="5" y="9" width="1" height="1"/><rect x="6" y="10" width="1" height="1"/><rect x="5" y="11" width="1" height="1"/><rect x="6" y="12" width="1" height="1"/><rect x="7" y="5" width="1" height="1"/><rect x="8" y="6" width="1" height="1"/><rect x="7" y="7" width="1" height="1"/><rect x="8" y="8" width="1" height="1"/><rect x="7" y="9" width="1" height="1"/><rect x="8" y="10" width="1" height="1"/><rect x="7" y="11" width="1" height="1"/><rect x="8" y="12" width="1" height="1"/><rect x="9" y="5" width="1" height="1"/><rect x="10" y="6" width="1" height="1"/><rect x="9" y="7" width="1" height="1"/><rect x="10" y="8" width="1" height="1"/><rect x="9" y="9" width="1" height="1"/><rect x="10" y="10" width="1" height="1"/><rect x="9" y="11" width="1" height="1"/><rect x="10" y="12" width="1" height="1"/><rect x="11" y="5" width="1" height="1"/><rect x="12" y="6" width="1" height="1"/><rect x="11" y="7" width="1" height="1"/><rect x="12" y="8" width="1" height="1"/><rect x="11" y="9" width="1" height="1"/><rect x="12" y="10" width="1" height="1"/><rect x="11" y="11" width="1" height="1"/><rect x="12" y="12" width="1" height="1"/></g></svg><div class="t" style="left:866.6px;top:494px;font-size:12px;color:#000;transform:scaleX(0.7083);width:49.0px;overflow:hidden;">ヘッダー</div><div class="a" style="left:830px;top:516px;width:9px;height:9px;background:#fff;border:1px solid #808080"></div><div class="a" style="left:832px;top:520px;width:5px;height:1px;background:#000"></div><div class="a" style="left:834px;top:518px;width:1px;height:5px;background:#000"></div><svg class="a" style="left:846px;top:513px" width="15" height="15" viewBox="0 0 15 15" shape-rendering="crispEdges"><path d="M.5 13.5 V2 L2 .5 H6 L7.5 2.5 H13.5 V13.5 Z" fill="#3434b8" stroke="#303048"/><path d="M1.5 13.5 H14.5 V3.5" fill="none" stroke="#606078"/><path d="M1 3.5 H13" stroke="#b0b0e8"/><g fill="#a0a0f0"><rect x="1" y="5" width="1" height="1"/><rect x="2" y="6" width="1" height="1"/><rect x="1" y="7" width="1" height="1"/><rect x="2" y="8" width="1" height="1"/><rect x="1" y="9" width="1" height="1"/><rect x="2" y="10" width="1" height="1"/><rect x="1" y="11" width="1" height="1"/><rect x="2" y="12" width="1" height="1"/><rect x="3" y="5" width="1" height="1"/><rect x="4" y="6" width="1" height="1"/><rect x="3" y="7" width="1" height="1"/><rect x="4" y="8" width="1" height="1"/><rect x="3" y="9" width="1" height="1"/><rect x="4" y="10" width="1" height="1"/><rect x="3" y="11" width="1" height="1"/><rect x="4" y="12" width="1" height="1"/><rect x="5" y="5" width="1" height="1"/><rect x="6" y="6" width="1" height="1"/><rect x="5" y="7" width="1" height="1"/><rect x="6" y="8" width="1" height="1"/><rect x="5" y="9" width="1" height="1"/><rect x="6" y="10" width="1" height="1"/><rect x="5" y="11" width="1" height="1"/><rect x="6" y="12" width="1" height="1"/><rect x="7" y="5" width="1" height="1"/><rect x="8" y="6" width="1" height="1"/><rect x="7" y="7" width="1" height="1"/><rect x="8" y="8" width="1" height="1"/><rect x="7" y="9" width="1" height="1"/><rect x="8" y="10" width="1" height="1"/><rect x="7" y="11" width="1" height="1"/><rect x="8" y="12" width="1" height="1"/><rect x="9" y="5" width="1" height="1"/><rect x="10" y="6" width="1" height="1"/><rect x="9" y="7" width="1" height="1"/><rect x="10" y="8" width="1" height="1"/><rect x="9" y="9" width="1" height="1"/><rect x="10" y="10" width="1" height="1"/><rect x="9" y="11" width="1" height="1"/><rect x="10" y="12" width="1" height="1"/><rect x="11" y="5" width="1" height="1"/><rect x="12" y="6" width="1" height="1"/><rect x="11" y="7" width="1" height="1"/><rect x="12" y="8" width="1" height="1"/><rect x="11" y="9" width="1" height="1"/><rect x="12" y="10" width="1" height="1"/><rect x="11" y="11" width="1" height="1"/><rect x="12" y="12" width="1" height="1"/></g></svg><div class="t" style="left:866.6px;top:512px;font-size:12px;color:#000;transform:scaleX(0.7381);width:85.0px;overflow:hidden;">サブプログラム</div><div class="a" style="left:830px;top:534px;width:9px;height:9px;background:#fff;border:1px solid #808080"></div><div class="a" style="left:832px;top:538px;width:5px;height:1px;background:#000"></div><div class="a" style="left:834px;top:536px;width:1px;height:5px;background:#000"></div><svg class="a" style="left:846px;top:531px" width="15" height="15" viewBox="0 0 15 15" shape-rendering="crispEdges"><path d="M.5 13.5 V2 L2 .5 H6 L7.5 2.5 H13.5 V13.5 Z" fill="#3434b8" stroke="#303048"/><path d="M1.5 13.5 H14.5 V3.5" fill="none" stroke="#606078"/><path d="M1 3.5 H13" stroke="#b0b0e8"/><g fill="#a0a0f0"><rect x="1" y="5" width="1" height="1"/><rect x="2" y="6" width="1" height="1"/><rect x="1" y="7" width="1" height="1"/><rect x="2" y="8" width="1" height="1"/><rect x="1" y="9" width="1" height="1"/><rect x="2" y="10" width="1" height="1"/><rect x="1" y="11" width="1" height="1"/><rect x="2" y="12" width="1" height="1"/><rect x="3" y="5" width="1" height="1"/><rect x="4" y="6" width="1" height="1"/><rect x="3" y="7" width="1" height="1"/><rect x="4" y="8" width="1" height="1"/><rect x="3" y="9" width="1" height="1"/><rect x="4" y="10" width="1" height="1"/><rect x="3" y="11" width="1" height="1"/><rect x="4" y="12" width="1" height="1"/><rect x="5" y="5" width="1" height="1"/><rect x="6" y="6" width="1" height="1"/><rect x="5" y="7" width="1" height="1"/><rect x="6" y="8" width="1" height="1"/><rect x="5" y="9" width="1" height="1"/><rect x="6" y="10" width="1" height="1"/><rect x="5" y="11" width="1" height="1"/><rect x="6" y="12" width="1" height="1"/><rect x="7" y="5" width="1" height="1"/><rect x="8" y="6" width="1" height="1"/><rect x="7" y="7" width="1" height="1"/><rect x="8" y="8" width="1" height="1"/><rect x="7" y="9" width="1" height="1"/><rect x="8" y="10" width="1" height="1"/><rect x="7" y="11" width="1" height="1"/><rect x="8" y="12" width="1" height="1"/><rect x="9" y="5" width="1" height="1"/><rect x="10" y="6" width="1" height="1"/><rect x="9" y="7" width="1" height="1"/><rect x="10" y="8" width="1" height="1"/><rect x="9" y="9" width="1" height="1"/><rect x="10" y="10" width="1" height="1"/><rect x="9" y="11" width="1" height="1"/><rect x="10" y="12" width="1" height="1"/><rect x="11" y="5" width="1" height="1"/><rect x="12" y="6" width="1" height="1"/><rect x="11" y="7" width="1" height="1"/><rect x="12" y="8" width="1" height="1"/><rect x="11" y="9" width="1" height="1"/><rect x="12" y="10" width="1" height="1"/><rect x="11" y="11" width="1" height="1"/><rect x="12" y="12" width="1" height="1"/></g></svg><div class="t" style="left:866.6px;top:530px;font-size:12px;color:#000;transform:scaleX(0.7188);width:97.0px;overflow:hidden;">メインプログラム</div><div class="a" style="left:830px;top:552px;width:9px;height:9px;background:#fff;border:1px solid #808080"></div><div class="a" style="left:832px;top:556px;width:5px;height:1px;background:#000"></div><div class="a" style="left:834px;top:554px;width:1px;height:5px;background:#000"></div><svg class="a" style="left:846px;top:549px" width="15" height="15" viewBox="0 0 15 15" shape-rendering="crispEdges"><path d="M.5 13.5 V2 L2 .5 H6 L7.5 2.5 H13.5 V13.5 Z" fill="#3434b8" stroke="#303048"/><path d="M1.5 13.5 H14.5 V3.5" fill="none" stroke="#606078"/><path d="M1 3.5 H13" stroke="#b0b0e8"/><g fill="#a0a0f0"><rect x="1" y="5" width="1" height="1"/><rect x="2" y="6" width="1" height="1"/><rect x="1" y="7" width="1" height="1"/><rect x="2" y="8" width="1" height="1"/><rect x="1" y="9" width="1" height="1"/><rect x="2" y="10" width="1" height="1"/><rect x="1" y="11" width="1" height="1"/><rect x="2" y="12" width="1" height="1"/><rect x="3" y="5" width="1" height="1"/><rect x="4" y="6" width="1" height="1"/><rect x="3" y="7" width="1" height="1"/><rect x="4" y="8" width="1" height="1"/><rect x="3" y="9" width="1" height="1"/><rect x="4" y="10" width="1" height="1"/><rect x="3" y="11" width="1" height="1"/><rect x="4" y="12" width="1" height="1"/><rect x="5" y="5" width="1" height="1"/><rect x="6" y="6" width="1" height="1"/><rect x="5" y="7" width="1" height="1"/><rect x="6" y="8" width="1" height="1"/><rect x="5" y="9" width="1" height="1"/><rect x="6" y="10" width="1" height="1"/><rect x="5" y="11" width="1" height="1"/><rect x="6" y="12" width="1" height="1"/><rect x="7" y="5" width="1" height="1"/><rect x="8" y="6" width="1" height="1"/><rect x="7" y="7" width="1" height="1"/><rect x="8" y="8" width="1" height="1"/><rect x="7" y="9" width="1" height="1"/><rect x="8" y="10" width="1" height="1"/><rect x="7" y="11" width="1" height="1"/><rect x="8" y="12" width="1" height="1"/><rect x="9" y="5" width="1" height="1"/><rect x="10" y="6" width="1" height="1"/><rect x="9" y="7" width="1" height="1"/><rect x="10" y="8" width="1" height="1"/><rect x="9" y="9" width="1" height="1"/><rect x="10" y="10" width="1" height="1"/><rect x="9" y="11" width="1" height="1"/><rect x="10" y="12" width="1" height="1"/><rect x="11" y="5" width="1" height="1"/><rect x="12" y="6" width="1" height="1"/><rect x="11" y="7" width="1" height="1"/><rect x="12" y="8" width="1" height="1"/><rect x="11" y="9" width="1" height="1"/><rect x="12" y="10" width="1" height="1"/><rect x="11" y="11" width="1" height="1"/><rect x="12" y="12" width="1" height="1"/></g></svg><div class="t" style="left:866.6px;top:548px;font-size:12px;color:#000;transform:scaleX(0.6562);width:49.0px;overflow:hidden;">フッター</div><div class="a" style="left:830px;top:570px;width:9px;height:9px;background:#fff;border:1px solid #808080"></div><div class="a" style="left:832px;top:574px;width:5px;height:1px;background:#000"></div><div class="a" style="left:834px;top:572px;width:1px;height:5px;background:#000"></div><svg class="a" style="left:846px;top:567px" width="15" height="15" viewBox="0 0 15 15" shape-rendering="crispEdges"><path d="M.5 13.5 V2 L2 .5 H6 L7.5 2.5 H13.5 V13.5 Z" fill="#3434b8" stroke="#303048"/><path d="M1.5 13.5 H14.5 V3.5" fill="none" stroke="#606078"/><path d="M1 3.5 H13" stroke="#b0b0e8"/><g fill="#a0a0f0"><rect x="1" y="5" width="1" height="1"/><rect x="2" y="6" width="1" height="1"/><rect x="1" y="7" width="1" height="1"/><rect x="2" y="8" width="1" height="1"/><rect x="1" y="9" width="1" height="1"/><rect x="2" y="10" width="1" height="1"/><rect x="1" y="11" width="1" height="1"/><rect x="2" y="12" width="1" height="1"/><rect x="3" y="5" width="1" height="1"/><rect x="4" y="6" width="1" height="1"/><rect x="3" y="7" width="1" height="1"/><rect x="4" y="8" width="1" height="1"/><rect x="3" y="9" width="1" height="1"/><rect x="4" y="10" width="1" height="1"/><rect x="3" y="11" width="1" height="1"/><rect x="4" y="12" width="1" height="1"/><rect x="5" y="5" width="1" height="1"/><rect x="6" y="6" width="1" height="1"/><rect x="5" y="7" width="1" height="1"/><rect x="6" y="8" width="1" height="1"/><rect x="5" y="9" width="1" height="1"/><rect x="6" y="10" width="1" height="1"/><rect x="5" y="11" width="1" height="1"/><rect x="6" y="12" width="1" height="1"/><rect x="7" y="5" width="1" height="1"/><rect x="8" y="6" width="1" height="1"/><rect x="7" y="7" width="1" height="1"/><rect x="8" y="8" width="1" height="1"/><rect x="7" y="9" width="1" height="1"/><rect x="8" y="10" width="1" height="1"/><rect x="7" y="11" width="1" height="1"/><rect x="8" y="12" width="1" height="1"/><rect x="9" y="5" width="1" height="1"/><rect x="10" y="6" width="1" height="1"/><rect x="9" y="7" width="1" height="1"/><rect x="10" y="8" width="1" height="1"/><rect x="9" y="9" width="1" height="1"/><rect x="10" y="10" width="1" height="1"/><rect x="9" y="11" width="1" height="1"/><rect x="10" y="12" width="1" height="1"/><rect x="11" y="5" width="1" height="1"/><rect x="12" y="6" width="1" height="1"/><rect x="11" y="7" width="1" height="1"/><rect x="12" y="8" width="1" height="1"/><rect x="11" y="9" width="1" height="1"/><rect x="12" y="10" width="1" height="1"/><rect x="11" y="11" width="1" height="1"/><rect x="12" y="12" width="1" height="1"/></g></svg><div class="t" style="left:866.6px;top:566px;font-size:12px;color:#000;transform:scaleX(0.8764);width:141.0px;overflow:hidden;">プログラム出力定義(共通)</div><div class="a" style="left:1213px;top:474px;width:374px;height:160px;background:#fff;border-top:2px solid #a0a0a0;border-left:2px solid #a0a0a0;border-right:1px solid #e0e0e0;border-bottom:1px solid #e0e0e0"></div><div class="a" style="left:1215px;top:476px;width:371px;height:16px;background:#f0f0f0;border-bottom:2px solid #a0a0a0"></div><div class="a" style="left:1397px;top:476px;width:2px;height:16px;border-left:1px solid #a0a0a0;border-right:1px solid #fff"></div><div class="a" style="left:1547px;top:476px;width:2px;height:16px;border-left:1px solid #a0a0a0;border-right:1px solid #fff"></div><div class="t" style="left:1220.6px;top:474.5px;font-size:12px;color:#000;transform:scaleX(0.8929);width:85.0px;overflow:hidden;">登録ブロック名</div><div class="t" style="left:1404px;top:474.5px;font-size:12px;color:#000;transform:scaleX(0.8929);width:85.0px;overflow:hidden;">コードサンプル</div><svg class="a" style="left:1218px;top:493.5px" width="15" height="15" viewBox="0 0 15 15" shape-rendering="crispEdges"><path d="M.5 13.5 V2 L2 .5 H6 L7.5 2.5 H13.5 V13.5 Z" fill="#3434b8" stroke="#303048"/><path d="M1.5 13.5 H14.5 V3.5" fill="none" stroke="#606078"/><path d="M1 3.5 H13" stroke="#b0b0e8"/><g fill="#a0a0f0"><rect x="1" y="5" width="1" height="1"/><rect x="2" y="6" width="1" height="1"/><rect x="1" y="7" width="1" height="1"/><rect x="2" y="8" width="1" height="1"/><rect x="1" y="9" width="1" height="1"/><rect x="2" y="10" width="1" height="1"/><rect x="1" y="11" width="1" height="1"/><rect x="2" y="12" width="1" height="1"/><rect x="3" y="5" width="1" height="1"/><rect x="4" y="6" width="1" height="1"/><rect x="3" y="7" width="1" height="1"/><rect x="4" y="8" width="1" height="1"/><rect x="3" y="9" width="1" height="1"/><rect x="4" y="10" width="1" height="1"/><rect x="3" y="11" width="1" height="1"/><rect x="4" y="12" width="1" height="1"/><rect x="5" y="5" width="1" height="1"/><rect x="6" y="6" width="1" height="1"/><rect x="5" y="7" width="1" height="1"/><rect x="6" y="8" width="1" height="1"/><rect x="5" y="9" width="1" height="1"/><rect x="6" y="10" width="1" height="1"/><rect x="5" y="11" width="1" height="1"/><rect x="6" y="12" width="1" height="1"/><rect x="7" y="5" width="1" height="1"/><rect x="8" y="6" width="1" height="1"/><rect x="7" y="7" width="1" height="1"/><rect x="8" y="8" width="1" height="1"/><rect x="7" y="9" width="1" height="1"/><rect x="8" y="10" width="1" height="1"/><rect x="7" y="11" width="1" height="1"/><rect x="8" y="12" width="1" height="1"/><rect x="9" y="5" width="1" height="1"/><rect x="10" y="6" width="1" height="1"/><rect x="9" y="7" width="1" height="1"/><rect x="10" y="8" width="1" height="1"/><rect x="9" y="9" width="1" height="1"/><rect x="10" y="10" width="1" height="1"/><rect x="9" y="11" width="1" height="1"/><rect x="10" y="12" width="1" height="1"/><rect x="11" y="5" width="1" height="1"/><rect x="12" y="6" width="1" height="1"/><rect x="11" y="7" width="1" height="1"/><rect x="12" y="8" width="1" height="1"/><rect x="11" y="9" width="1" height="1"/><rect x="12" y="10" width="1" height="1"/><rect x="11" y="11" width="1" height="1"/><rect x="12" y="12" width="1" height="1"/></g></svg><div class="t" style="left:1234.5px;top:492.5px;font-size:12px;color:#000;transform:scaleX(0.8750);width:49.0px;overflow:hidden;">ヘッダー</div><svg class="a" style="left:1218px;top:510.5px" width="15" height="15" viewBox="0 0 15 15" shape-rendering="crispEdges"><path d="M.5 13.5 V2 L2 .5 H6 L7.5 2.5 H13.5 V13.5 Z" fill="#3434b8" stroke="#303048"/><path d="M1.5 13.5 H14.5 V3.5" fill="none" stroke="#606078"/><path d="M1 3.5 H13" stroke="#b0b0e8"/><g fill="#a0a0f0"><rect x="1" y="5" width="1" height="1"/><rect x="2" y="6" width="1" height="1"/><rect x="1" y="7" width="1" height="1"/><rect x="2" y="8" width="1" height="1"/><rect x="1" y="9" width="1" height="1"/><rect x="2" y="10" width="1" height="1"/><rect x="1" y="11" width="1" height="1"/><rect x="2" y="12" width="1" height="1"/><rect x="3" y="5" width="1" height="1"/><rect x="4" y="6" width="1" height="1"/><rect x="3" y="7" width="1" height="1"/><rect x="4" y="8" width="1" height="1"/><rect x="3" y="9" width="1" height="1"/><rect x="4" y="10" width="1" height="1"/><rect x="3" y="11" width="1" height="1"/><rect x="4" y="12" width="1" height="1"/><rect x="5" y="5" width="1" height="1"/><rect x="6" y="6" width="1" height="1"/><rect x="5" y="7" width="1" height="1"/><rect x="6" y="8" width="1" height="1"/><rect x="5" y="9" width="1" height="1"/><rect x="6" y="10" width="1" height="1"/><rect x="5" y="11" width="1" height="1"/><rect x="6" y="12" width="1" height="1"/><rect x="7" y="5" width="1" height="1"/><rect x="8" y="6" width="1" height="1"/><rect x="7" y="7" width="1" height="1"/><rect x="8" y="8" width="1" height="1"/><rect x="7" y="9" width="1" height="1"/><rect x="8" y="10" width="1" height="1"/><rect x="7" y="11" width="1" height="1"/><rect x="8" y="12" width="1" height="1"/><rect x="9" y="5" width="1" height="1"/><rect x="10" y="6" width="1" height="1"/><rect x="9" y="7" width="1" height="1"/><rect x="10" y="8" width="1" height="1"/><rect x="9" y="9" width="1" height="1"/><rect x="10" y="10" width="1" height="1"/><rect x="9" y="11" width="1" height="1"/><rect x="10" y="12" width="1" height="1"/><rect x="11" y="5" width="1" height="1"/><rect x="12" y="6" width="1" height="1"/><rect x="11" y="7" width="1" height="1"/><rect x="12" y="8" width="1" height="1"/><rect x="11" y="9" width="1" height="1"/><rect x="12" y="10" width="1" height="1"/><rect x="11" y="11" width="1" height="1"/><rect x="12" y="12" width="1" height="1"/></g></svg><div class="t" style="left:1234.5px;top:509.5px;font-size:12px;color:#000;transform:scaleX(0.9167);width:85.0px;overflow:hidden;">サブプログラム</div><svg class="a" style="left:1218px;top:527.5px" width="15" height="15" viewBox="0 0 15 15" shape-rendering="crispEdges"><path d="M.5 13.5 V2 L2 .5 H6 L7.5 2.5 H13.5 V13.5 Z" fill="#3434b8" stroke="#303048"/><path d="M1.5 13.5 H14.5 V3.5" fill="none" stroke="#606078"/><path d="M1 3.5 H13" stroke="#b0b0e8"/><g fill="#a0a0f0"><rect x="1" y="5" width="1" height="1"/><rect x="2" y="6" width="1" height="1"/><rect x="1" y="7" width="1" height="1"/><rect x="2" y="8" width="1" height="1"/><rect x="1" y="9" width="1" height="1"/><rect x="2" y="10" width="1" height="1"/><rect x="1" y="11" width="1" height="1"/><rect x="2" y="12" width="1" height="1"/><rect x="3" y="5" width="1" height="1"/><rect x="4" y="6" width="1" height="1"/><rect x="3" y="7" width="1" height="1"/><rect x="4" y="8" width="1" height="1"/><rect x="3" y="9" width="1" height="1"/><rect x="4" y="10" width="1" height="1"/><rect x="3" y="11" width="1" height="1"/><rect x="4" y="12" width="1" height="1"/><rect x="5" y="5" width="1" height="1"/><rect x="6" y="6" width="1" height="1"/><rect x="5" y="7" width="1" height="1"/><rect x="6" y="8" width="1" height="1"/><rect x="5" y="9" width="1" height="1"/><rect x="6" y="10" width="1" height="1"/><rect x="5" y="11" width="1" height="1"/><rect x="6" y="12" width="1" height="1"/><rect x="7" y="5" width="1" height="1"/><rect x="8" y="6" width="1" height="1"/><rect x="7" y="7" width="1" height="1"/><rect x="8" y="8" width="1" height="1"/><rect x="7" y="9" width="1" height="1"/><rect x="8" y="10" width="1" height="1"/><rect x="7" y="11" width="1" height="1"/><rect x="8" y="12" width="1" height="1"/><rect x="9" y="5" width="1" height="1"/><rect x="10" y="6" width="1" height="1"/><rect x="9" y="7" width="1" height="1"/><rect x="10" y="8" width="1" height="1"/><rect x="9" y="9" width="1" height="1"/><rect x="10" y="10" width="1" height="1"/><rect x="9" y="11" width="1" height="1"/><rect x="10" y="12" width="1" height="1"/><rect x="11" y="5" width="1" height="1"/><rect x="12" y="6" width="1" height="1"/><rect x="11" y="7" width="1" height="1"/><rect x="12" y="8" width="1" height="1"/><rect x="11" y="9" width="1" height="1"/><rect x="12" y="10" width="1" height="1"/><rect x="11" y="11" width="1" height="1"/><rect x="12" y="12" width="1" height="1"/></g></svg><div class="t" style="left:1234.5px;top:526.5px;font-size:12px;color:#000;transform:scaleX(0.8646);width:97.0px;overflow:hidden;">メインプログラム</div><svg class="a" style="left:1218px;top:544.5px" width="15" height="15" viewBox="0 0 15 15" shape-rendering="crispEdges"><path d="M.5 13.5 V2 L2 .5 H6 L7.5 2.5 H13.5 V13.5 Z" fill="#3434b8" stroke="#303048"/><path d="M1.5 13.5 H14.5 V3.5" fill="none" stroke="#606078"/><path d="M1 3.5 H13" stroke="#b0b0e8"/><g fill="#a0a0f0"><rect x="1" y="5" width="1" height="1"/><rect x="2" y="6" width="1" height="1"/><rect x="1" y="7" width="1" height="1"/><rect x="2" y="8" width="1" height="1"/><rect x="1" y="9" width="1" height="1"/><rect x="2" y="10" width="1" height="1"/><rect x="1" y="11" width="1" height="1"/><rect x="2" y="12" width="1" height="1"/><rect x="3" y="5" width="1" height="1"/><rect x="4" y="6" width="1" height="1"/><rect x="3" y="7" width="1" height="1"/><rect x="4" y="8" width="1" height="1"/><rect x="3" y="9" width="1" height="1"/><rect x="4" y="10" width="1" height="1"/><rect x="3" y="11" width="1" height="1"/><rect x="4" y="12" width="1" height="1"/><rect x="5" y="5" width="1" height="1"/><rect x="6" y="6" width="1" height="1"/><rect x="5" y="7" width="1" height="1"/><rect x="6" y="8" width="1" height="1"/><rect x="5" y="9" width="1" height="1"/><rect x="6" y="10" width="1" height="1"/><rect x="5" y="11" width="1" height="1"/><rect x="6" y="12" width="1" height="1"/><rect x="7" y="5" width="1" height="1"/><rect x="8" y="6" width="1" height="1"/><rect x="7" y="7" width="1" height="1"/><rect x="8" y="8" width="1" height="1"/><rect x="7" y="9" width="1" height="1"/><rect x="8" y="10" width="1" height="1"/><rect x="7" y="11" width="1" height="1"/><rect x="8" y="12" width="1" height="1"/><rect x="9" y="5" width="1" height="1"/><rect x="10" y="6" width="1" height="1"/><rect x="9" y="7" width="1" height="1"/><rect x="10" y="8" width="1" height="1"/><rect x="9" y="9" width="1" height="1"/><rect x="10" y="10" width="1" height="1"/><rect x="9" y="11" width="1" height="1"/><rect x="10" y="12" width="1" height="1"/><rect x="11" y="5" width="1" height="1"/><rect x="12" y="6" width="1" height="1"/><rect x="11" y="7" width="1" height="1"/><rect x="12" y="8" width="1" height="1"/><rect x="11" y="9" width="1" height="1"/><rect x="12" y="10" width="1" height="1"/><rect x="11" y="11" width="1" height="1"/><rect x="12" y="12" width="1" height="1"/></g></svg><div class="t" style="left:1234.5px;top:543.5px;font-size:12px;color:#000;transform:scaleX(0.8125);width:49.0px;overflow:hidden;">フッター</div><svg class="a" style="left:1218px;top:561.5px" width="15" height="15" viewBox="0 0 15 15" shape-rendering="crispEdges"><path d="M.5 13.5 V2 L2 .5 H6 L7.5 2.5 H13.5 V13.5 Z" fill="#3434b8" stroke="#303048"/><path d="M1.5 13.5 H14.5 V3.5" fill="none" stroke="#606078"/><path d="M1 3.5 H13" stroke="#b0b0e8"/><g fill="#a0a0f0"><rect x="1" y="5" width="1" height="1"/><rect x="2" y="6" width="1" height="1"/><rect x="1" y="7" width="1" height="1"/><rect x="2" y="8" width="1" height="1"/><rect x="1" y="9" width="1" height="1"/><rect x="2" y="10" width="1" height="1"/><rect x="1" y="11" width="1" height="1"/><rect x="2" y="12" width="1" height="1"/><rect x="3" y="5" width="1" height="1"/><rect x="4" y="6" width="1" height="1"/><rect x="3" y="7" width="1" height="1"/><rect x="4" y="8" width="1" height="1"/><rect x="3" y="9" width="1" height="1"/><rect x="4" y="10" width="1" height="1"/><rect x="3" y="11" width="1" height="1"/><rect x="4" y="12" width="1" height="1"/><rect x="5" y="5" width="1" height="1"/><rect x="6" y="6" width="1" height="1"/><rect x="5" y="7" width="1" height="1"/><rect x="6" y="8" width="1" height="1"/><rect x="5" y="9" width="1" height="1"/><rect x="6" y="10" width="1" height="1"/><rect x="5" y="11" width="1" height="1"/><rect x="6" y="12" width="1" height="1"/><rect x="7" y="5" width="1" height="1"/><rect x="8" y="6" width="1" height="1"/><rect x="7" y="7" width="1" height="1"/><rect x="8" y="8" width="1" height="1"/><rect x="7" y="9" width="1" height="1"/><rect x="8" y="10" width="1" height="1"/><rect x="7" y="11" width="1" height="1"/><rect x="8" y="12" width="1" height="1"/><rect x="9" y="5" width="1" height="1"/><rect x="10" y="6" width="1" height="1"/><rect x="9" y="7" width="1" height="1"/><rect x="10" y="8" width="1" height="1"/><rect x="9" y="9" width="1" height="1"/><rect x="10" y="10" width="1" height="1"/><rect x="9" y="11" width="1" height="1"/><rect x="10" y="12" width="1" height="1"/><rect x="11" y="5" width="1" height="1"/><rect x="12" y="6" width="1" height="1"/><rect x="11" y="7" width="1" height="1"/><rect x="12" y="8" width="1" height="1"/><rect x="11" y="9" width="1" height="1"/><rect x="12" y="10" width="1" height="1"/><rect x="11" y="11" width="1" height="1"/><rect x="12" y="12" width="1" height="1"/></g></svg><div class="t" style="left:1234.5px;top:560.5px;font-size:12px;color:#000;transform:scaleX(0.9621);width:141.0px;overflow:hidden;">プログラム出力定義(共通)</div><div class="a" style="left:1213px;top:634px;width:374px;height:26px;background:#f0f0f0"></div><svg class="a" style="left:1241px;top:641px" width="14" height="11" viewBox="0 0 14 11" ><path d="M7 0 L14 11 H0 Z" fill="#000080"/></svg><div class="t" style="left:1312px;top:638.5px;font-size:12px;color:#000;transform:scaleX(0.9792);width:25.0px;overflow:hidden;">追加</div><svg class="a" style="left:1427px;top:639px" width="15" height="15" viewBox="0 0 15 15" ><path d="M1.5 1.5 L13.5 13.5 M13.5 1.5 L1.5 13.5" stroke="#e00000" stroke-width="2.2"/></svg><div class="t" style="left:1498.6px;top:638.5px;font-size:12px;color:#000;transform:scaleX(0.9792);width:25.0px;overflow:hidden;">削除</div><div class="a" style="left:1213px;top:660px;width:374px;height:159px;background:#fff;border-top:2px solid #a0a0a0;border-left:2px solid #a0a0a0;border-right:1px solid #e0e0e0;border-bottom:1px solid #e0e0e0"></div><div class="a" style="left:1215px;top:662px;width:371px;height:16px;background:#f0f0f0;border-bottom:2px solid #a0a0a0"></div><div class="a" style="left:1397px;top:662px;width:2px;height:16px;border-left:1px solid #a0a0a0;border-right:1px solid #fff"></div><div class="a" style="left:1547px;top:662px;width:2px;height:16px;border-left:1px solid #a0a0a0;border-right:1px solid #fff"></div><div class="t" style="left:1220.8px;top:660.5px;font-size:12px;color:#000;transform:scaleX(0.9231);width:109.0px;overflow:hidden;">追加可能ブロック名</div><div class="t" style="left:1404px;top:660.5px;font-size:12px;color:#000;transform:scaleX(1.0000);width:25.0px;overflow:hidden;">解説</div><svg class="a" style="left:1218px;top:679.5px" width="15" height="15" viewBox="0 0 15 15" shape-rendering="crispEdges"><path d="M.5 13.5 V2 L2 .5 H6 L7.5 2.5 H13.5 V13.5 Z" fill="#3434b8" stroke="#303048"/><path d="M1.5 13.5 H14.5 V3.5" fill="none" stroke="#606078"/><path d="M1 3.5 H13" stroke="#b0b0e8"/><g fill="#a0a0f0"><rect x="1" y="5" width="1" height="1"/><rect x="2" y="6" width="1" height="1"/><rect x="1" y="7" width="1" height="1"/><rect x="2" y="8" width="1" height="1"/><rect x="1" y="9" width="1" height="1"/><rect x="2" y="10" width="1" height="1"/><rect x="1" y="11" width="1" height="1"/><rect x="2" y="12" width="1" height="1"/><rect x="3" y="5" width="1" height="1"/><rect x="4" y="6" width="1" height="1"/><rect x="3" y="7" width="1" height="1"/><rect x="4" y="8" width="1" height="1"/><rect x="3" y="9" width="1" height="1"/><rect x="4" y="10" width="1" height="1"/><rect x="3" y="11" width="1" height="1"/><rect x="4" y="12" width="1" height="1"/><rect x="5" y="5" width="1" height="1"/><rect x="6" y="6" width="1" height="1"/><rect x="5" y="7" width="1" height="1"/><rect x="6" y="8" width="1" height="1"/><rect x="5" y="9" width="1" height="1"/><rect x="6" y="10" width="1" height="1"/><rect x="5" y="11" width="1" height="1"/><rect x="6" y="12" width="1" height="1"/><rect x="7" y="5" width="1" height="1"/><rect x="8" y="6" width="1" height="1"/><rect x="7" y="7" width="1" height="1"/><rect x="8" y="8" width="1" height="1"/><rect x="7" y="9" width="1" height="1"/><rect x="8" y="10" width="1" height="1"/><rect x="7" y="11" width="1" height="1"/><rect x="8" y="12" width="1" height="1"/><rect x="9" y="5" width="1" height="1"/><rect x="10" y="6" width="1" height="1"/><rect x="9" y="7" width="1" height="1"/><rect x="10" y="8" width="1" height="1"/><rect x="9" y="9" width="1" height="1"/><rect x="10" y="10" width="1" height="1"/><rect x="9" y="11" width="1" height="1"/><rect x="10" y="12" width="1" height="1"/><rect x="11" y="5" width="1" height="1"/><rect x="12" y="6" width="1" height="1"/><rect x="11" y="7" width="1" height="1"/><rect x="12" y="8" width="1" height="1"/><rect x="11" y="9" width="1" height="1"/><rect x="12" y="10" width="1" height="1"/><rect x="11" y="11" width="1" height="1"/><rect x="12" y="12" width="1" height="1"/></g></svg><div class="t" style="left:1234px;top:678.5px;font-size:12px;color:#000;transform:scaleX(0.8750);width:49.0px;overflow:hidden;">ヘッダー</div><div class="t" style="left:1404.7px;top:678.5px;font-size:12px;color:#000;transform:scaleX(0.9224);width:143.0px;overflow:hidden;">出力ファイルの先頭に出...</div><svg class="a" style="left:1218px;top:696.5px" width="15" height="15" viewBox="0 0 15 15" shape-rendering="crispEdges"><path d="M.5 13.5 V2 L2 .5 H6 L7.5 2.5 H13.5 V13.5 Z" fill="#3434b8" stroke="#303048"/><path d="M1.5 13.5 H14.5 V3.5" fill="none" stroke="#606078"/><path d="M1 3.5 H13" stroke="#b0b0e8"/><g fill="#a0a0f0"><rect x="1" y="5" width="1" height="1"/><rect x="2" y="6" width="1" height="1"/><rect x="1" y="7" width="1" height="1"/><rect x="2" y="8" width="1" height="1"/><rect x="1" y="9" width="1" height="1"/><rect x="2" y="10" width="1" height="1"/><rect x="1" y="11" width="1" height="1"/><rect x="2" y="12" width="1" height="1"/><rect x="3" y="5" width="1" height="1"/><rect x="4" y="6" width="1" height="1"/><rect x="3" y="7" width="1" height="1"/><rect x="4" y="8" width="1" height="1"/><rect x="3" y="9" width="1" height="1"/><rect x="4" y="10" width="1" height="1"/><rect x="3" y="11" width="1" height="1"/><rect x="4" y="12" width="1" height="1"/><rect x="5" y="5" width="1" height="1"/><rect x="6" y="6" width="1" height="1"/><rect x="5" y="7" width="1" height="1"/><rect x="6" y="8" width="1" height="1"/><rect x="5" y="9" width="1" height="1"/><rect x="6" y="10" width="1" height="1"/><rect x="5" y="11" width="1" height="1"/><rect x="6" y="12" width="1" height="1"/><rect x="7" y="5" width="1" height="1"/><rect x="8" y="6" width="1" height="1"/><rect x="7" y="7" width="1" height="1"/><rect x="8" y="8" width="1" height="1"/><rect x="7" y="9" width="1" height="1"/><rect x="8" y="10" width="1" height="1"/><rect x="7" y="11" width="1" height="1"/><rect x="8" y="12" width="1" height="1"/><rect x="9" y="5" width="1" height="1"/><rect x="10" y="6" width="1" height="1"/><rect x="9" y="7" width="1" height="1"/><rect x="10" y="8" width="1" height="1"/><rect x="9" y="9" width="1" height="1"/><rect x="10" y="10" width="1" height="1"/><rect x="9" y="11" width="1" height="1"/><rect x="10" y="12" width="1" height="1"/><rect x="11" y="5" width="1" height="1"/><rect x="12" y="6" width="1" height="1"/><rect x="11" y="7" width="1" height="1"/><rect x="12" y="8" width="1" height="1"/><rect x="11" y="9" width="1" height="1"/><rect x="12" y="10" width="1" height="1"/><rect x="11" y="11" width="1" height="1"/><rect x="12" y="12" width="1" height="1"/></g></svg><div class="t" style="left:1234px;top:695.5px;font-size:12px;color:#000;transform:scaleX(0.8250);width:49.0px;overflow:hidden;">フッター</div><div class="t" style="left:1404.7px;top:695.5px;font-size:12px;color:#000;transform:scaleX(0.9224);width:143.0px;overflow:hidden;">出力ファイルの最後に出...</div><svg class="a" style="left:1218px;top:713.5px" width="15" height="15" viewBox="0 0 15 15" shape-rendering="crispEdges"><path d="M.5 13.5 V2 L2 .5 H6 L7.5 2.5 H13.5 V13.5 Z" fill="#3434b8" stroke="#303048"/><path d="M1.5 13.5 H14.5 V3.5" fill="none" stroke="#606078"/><path d="M1 3.5 H13" stroke="#b0b0e8"/><g fill="#a0a0f0"><rect x="1" y="5" width="1" height="1"/><rect x="2" y="6" width="1" height="1"/><rect x="1" y="7" width="1" height="1"/><rect x="2" y="8" width="1" height="1"/><rect x="1" y="9" width="1" height="1"/><rect x="2" y="10" width="1" height="1"/><rect x="1" y="11" width="1" height="1"/><rect x="2" y="12" width="1" height="1"/><rect x="3" y="5" width="1" height="1"/><rect x="4" y="6" width="1" height="1"/><rect x="3" y="7" width="1" height="1"/><rect x="4" y="8" width="1" height="1"/><rect x="3" y="9" width="1" height="1"/><rect x="4" y="10" width="1" height="1"/><rect x="3" y="11" width="1" height="1"/><rect x="4" y="12" width="1" height="1"/><rect x="5" y="5" width="1" height="1"/><rect x="6" y="6" width="1" height="1"/><rect x="5" y="7" width="1" height="1"/><rect x="6" y="8" width="1" height="1"/><rect x="5" y="9" width="1" height="1"/><rect x="6" y="10" width="1" height="1"/><rect x="5" y="11" width="1" height="1"/><rect x="6" y="12" width="1" height="1"/><rect x="7" y="5" width="1" height="1"/><rect x="8" y="6" width="1" height="1"/><rect x="7" y="7" width="1" height="1"/><rect x="8" y="8" width="1" height="1"/><rect x="7" y="9" width="1" height="1"/><rect x="8" y="10" width="1" height="1"/><rect x="7" y="11" width="1" height="1"/><rect x="8" y="12" width="1" height="1"/><rect x="9" y="5" width="1" height="1"/><rect x="10" y="6" width="1" height="1"/><rect x="9" y="7" width="1" height="1"/><rect x="10" y="8" width="1" height="1"/><rect x="9" y="9" width="1" height="1"/><rect x="10" y="10" width="1" height="1"/><rect x="9" y="11" width="1" height="1"/><rect x="10" y="12" width="1" height="1"/><rect x="11" y="5" width="1" height="1"/><rect x="12" y="6" width="1" height="1"/><rect x="11" y="7" width="1" height="1"/><rect x="12" y="8" width="1" height="1"/><rect x="11" y="9" width="1" height="1"/><rect x="12" y="10" width="1" height="1"/><rect x="11" y="11" width="1" height="1"/><rect x="12" y="12" width="1" height="1"/></g></svg><div class="t" style="left:1234px;top:712.5px;font-size:12px;color:#000;transform:scaleX(0.8615);width:97.0px;overflow:hidden;">メインプログラム</div><div class="t" style="left:1404.7px;top:712.5px;font-size:12px;color:#000;transform:scaleX(0.8895);width:155.0px;overflow:hidden;">メインプログラム用の出力...</div><svg class="a" style="left:1218px;top:730.5px" width="15" height="15" viewBox="0 0 15 15" shape-rendering="crispEdges"><path d="M.5 13.5 V2 L2 .5 H6 L7.5 2.5 H13.5 V13.5 Z" fill="#3434b8" stroke="#303048"/><path d="M1.5 13.5 H14.5 V3.5" fill="none" stroke="#606078"/><path d="M1 3.5 H13" stroke="#b0b0e8"/><g fill="#a0a0f0"><rect x="1" y="5" width="1" height="1"/><rect x="2" y="6" width="1" height="1"/><rect x="1" y="7" width="1" height="1"/><rect x="2" y="8" width="1" height="1"/><rect x="1" y="9" width="1" height="1"/><rect x="2" y="10" width="1" height="1"/><rect x="1" y="11" width="1" height="1"/><rect x="2" y="12" width="1" height="1"/><rect x="3" y="5" width="1" height="1"/><rect x="4" y="6" width="1" height="1"/><rect x="3" y="7" width="1" height="1"/><rect x="4" y="8" width="1" height="1"/><rect x="3" y="9" width="1" height="1"/><rect x="4" y="10" width="1" height="1"/><rect x="3" y="11" width="1" height="1"/><rect x="4" y="12" width="1" height="1"/><rect x="5" y="5" width="1" height="1"/><rect x="6" y="6" width="1" height="1"/><rect x="5" y="7" width="1" height="1"/><rect x="6" y="8" width="1" height="1"/><rect x="5" y="9" width="1" height="1"/><rect x="6" y="10" width="1" height="1"/><rect x="5" y="11" width="1" height="1"/><rect x="6" y="12" width="1" height="1"/><rect x="7" y="5" width="1" height="1"/><rect x="8" y="6" width="1" height="1"/><rect x="7" y="7" width="1" height="1"/><rect x="8" y="8" width="1" height="1"/><rect x="7" y="9" width="1" height="1"/><rect x="8" y="10" width="1" height="1"/><rect x="7" y="11" width="1" height="1"/><rect x="8" y="12" width="1" height="1"/><rect x="9" y="5" width="1" height="1"/><rect x="10" y="6" width="1" height="1"/><rect x="9" y="7" width="1" height="1"/><rect x="10" y="8" width="1" height="1"/><rect x="9" y="9" width="1" height="1"/><rect x="10" y="10" width="1" height="1"/><rect x="9" y="11" width="1" height="1"/><rect x="10" y="12" width="1" height="1"/><rect x="11" y="5" width="1" height="1"/><rect x="12" y="6" width="1" height="1"/><rect x="11" y="7" width="1" height="1"/><rect x="12" y="8" width="1" height="1"/><rect x="11" y="9" width="1" height="1"/><rect x="12" y="10" width="1" height="1"/><rect x="11" y="11" width="1" height="1"/><rect x="12" y="12" width="1" height="1"/></g></svg><div class="t" style="left:1234px;top:729.5px;font-size:12px;color:#000;transform:scaleX(0.9167);width:85.0px;overflow:hidden;">サブプログラム</div><div class="t" style="left:1404.7px;top:729.5px;font-size:12px;color:#000;transform:scaleX(0.9224);width:143.0px;overflow:hidden;">サブプログラム用の出力...</div><svg class="a" style="left:1218px;top:747.5px" width="15" height="15" viewBox="0 0 15 15" shape-rendering="crispEdges"><path d="M.5 13.5 V2 L2 .5 H6 L7.5 2.5 H13.5 V13.5 Z" fill="#3434b8" stroke="#303048"/><path d="M1.5 13.5 H14.5 V3.5" fill="none" stroke="#606078"/><path d="M1 3.5 H13" stroke="#b0b0e8"/><g fill="#a0a0f0"><rect x="1" y="5" width="1" height="1"/><rect x="2" y="6" width="1" height="1"/><rect x="1" y="7" width="1" height="1"/><rect x="2" y="8" width="1" height="1"/><rect x="1" y="9" width="1" height="1"/><rect x="2" y="10" width="1" height="1"/><rect x="1" y="11" width="1" height="1"/><rect x="2" y="12" width="1" height="1"/><rect x="3" y="5" width="1" height="1"/><rect x="4" y="6" width="1" height="1"/><rect x="3" y="7" width="1" height="1"/><rect x="4" y="8" width="1" height="1"/><rect x="3" y="9" width="1" height="1"/><rect x="4" y="10" width="1" height="1"/><rect x="3" y="11" width="1" height="1"/><rect x="4" y="12" width="1" height="1"/><rect x="5" y="5" width="1" height="1"/><rect x="6" y="6" width="1" height="1"/><rect x="5" y="7" width="1" height="1"/><rect x="6" y="8" width="1" height="1"/><rect x="5" y="9" width="1" height="1"/><rect x="6" y="10" width="1" height="1"/><rect x="5" y="11" width="1" height="1"/><rect x="6" y="12" width="1" height="1"/><rect x="7" y="5" width="1" height="1"/><rect x="8" y="6" width="1" height="1"/><rect x="7" y="7" width="1" height="1"/><rect x="8" y="8" width="1" height="1"/><rect x="7" y="9" width="1" height="1"/><rect x="8" y="10" width="1" height="1"/><rect x="7" y="11" width="1" height="1"/><rect x="8" y="12" width="1" height="1"/><rect x="9" y="5" width="1" height="1"/><rect x="10" y="6" width="1" height="1"/><rect x="9" y="7" width="1" height="1"/><rect x="10" y="8" width="1" height="1"/><rect x="9" y="9" width="1" height="1"/><rect x="10" y="10" width="1" height="1"/><rect x="9" y="11" width="1" height="1"/><rect x="10" y="12" width="1" height="1"/><rect x="11" y="5" width="1" height="1"/><rect x="12" y="6" width="1" height="1"/><rect x="11" y="7" width="1" height="1"/><rect x="12" y="8" width="1" height="1"/><rect x="11" y="9" width="1" height="1"/><rect x="12" y="10" width="1" height="1"/><rect x="11" y="11" width="1" height="1"/><rect x="12" y="12" width="1" height="1"/></g></svg><div class="t" style="left:1234px;top:746.5px;font-size:12px;color:#000;transform:scaleX(0.9614);width:141.0px;overflow:hidden;">プログラム出力定義(共通)</div><div class="t" style="left:1404.7px;top:746.5px;font-size:12px;color:#000;transform:scaleX(0.9224);width:143.0px;overflow:hidden;">プログラム内の出力に必...</div><div class="a" style="left:1452px;top:822px;width:17px;height:17px;border-top:1px solid #a0a0a0;border-left:1px solid #a0a0a0"></div><div class="a" style="left:1472px;top:822px;width:27px;height:17px;border-top:1px solid #a0a0a0;border-left:1px solid #a0a0a0"></div><div class="a" style="left:1502px;top:822px;width:33px;height:17px;border-top:1px solid #a0a0a0;border-left:1px solid #a0a0a0"></div><div class="a" style="left:1539px;top:822px;width:31px;height:17px;border-top:1px solid #a0a0a0;border-left:1px solid #a0a0a0"></div><div class="t" style="left:1504px;top:823px;font-size:12px;color:#000;transform:scaleX(1.0246);width:28.3px;overflow:hidden;">NUM</div><svg class="a" style="left:1575px;top:826px" width="12" height="12" viewBox="0 0 12 12" ><path d="M11 1 L1 11 M11 5 L5 11 M11 9 L9 11" stroke="#a0a0a0"/></svg>
</body></html>
